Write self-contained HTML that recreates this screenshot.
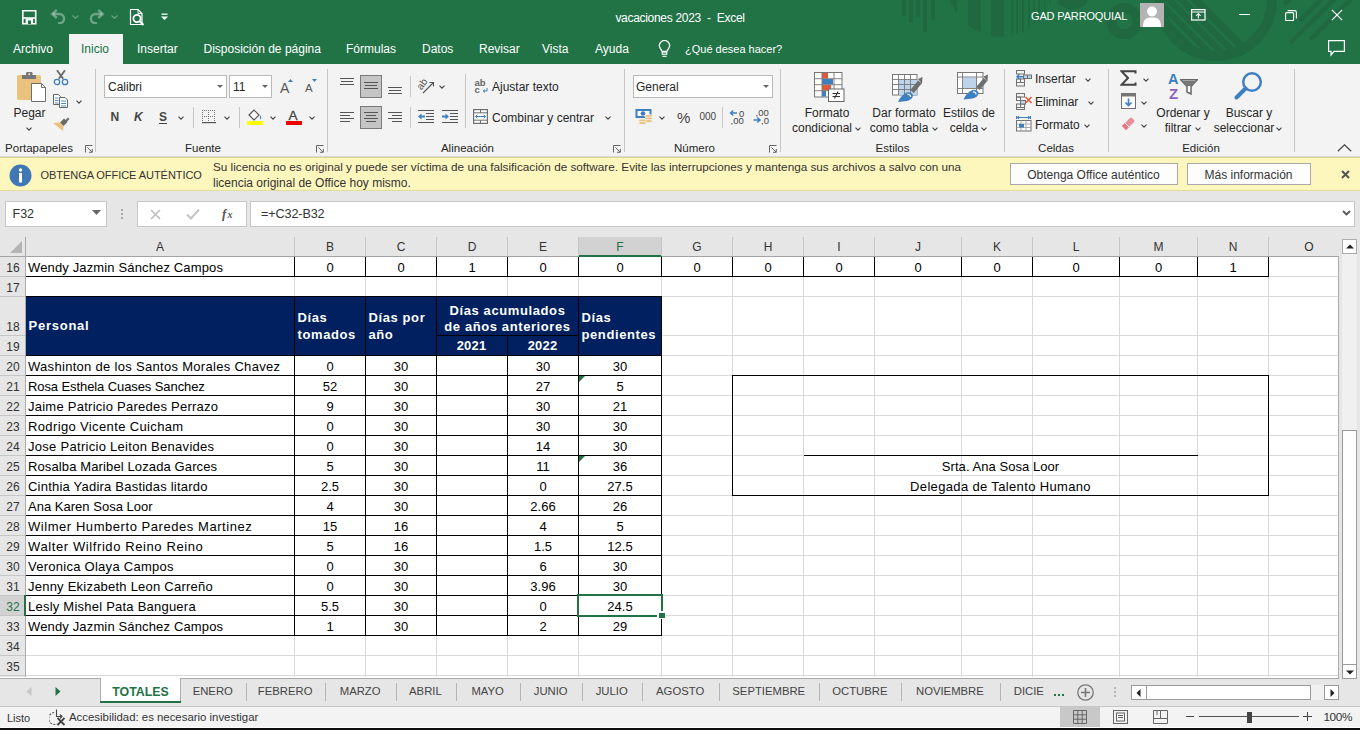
<!DOCTYPE html>
<html><head><meta charset="utf-8"><title>vacaciones 2023 - Excel</title>
<style>html,body{margin:0;padding:0;width:1360px;height:730px;overflow:hidden;background:#fff;font-family:"Liberation Sans",sans-serif;}
#root{position:relative;width:1360px;height:730px;overflow:hidden;}</style></head>
<body><div id="root">
<div style="position:absolute;left:0px;top:0px;width:1360px;height:64px;background:#217346"></div>
<svg style="position:absolute;left:0px;top:0px;" width="1360" height="64" viewBox="0 0 1360 64"><rect x="902" y="0" width="4" height="16" fill="rgba(20,20,20,0.11)"/><rect x="909" y="0" width="4" height="22.7" fill="rgba(20,20,20,0.11)"/><rect x="916" y="0" width="4" height="16.7" fill="rgba(20,20,20,0.11)"/><rect x="923" y="0" width="4" height="31.8" fill="rgba(20,20,20,0.11)"/><rect x="931" y="0" width="4" height="19.7" fill="rgba(20,20,20,0.11)"/><clipPath id="bowl"><circle cx="1001" cy="-16" r="52.6"/></clipPath><g clip-path="url(#bowl)" fill="rgba(20,20,20,0.11)"><rect x="968" y="0" width="13" height="40"/><rect x="991" y="0" width="13" height="40"/><rect x="1011.3" y="0" width="2" height="40"/><rect x="1016" y="0" width="2" height="40"/><rect x="1022" y="0" width="2" height="40"/><rect x="1028.3" y="0" width="1.6" height="40"/><rect x="1033.4" y="0" width="1.6" height="40"/><rect x="1038.4" y="0" width="1.8" height="40"/><rect x="1044" y="0" width="1.6" height="40"/><rect x="1049.4" y="0" width="1.5" height="40"/></g><path d="M949.7 0 L956.8 0 L956.8 13.7 Z" fill="rgba(20,20,20,0.11)"/><path d="M1058 0 A14 9 0 0 0 1087 0 Z" fill="rgba(20,20,20,0.11)"/><circle cx="1124.5" cy="21" r="13" fill="none" stroke="rgba(20,20,20,0.11)" stroke-width="10"/><clipPath id="bigd"><circle cx="1216" cy="0" r="61"/></clipPath><g clip-path="url(#bigd)"><rect x="1150" y="0" width="130" height="64" fill="rgba(20,20,20,0.11)"/></g><clipPath id="bigin"><circle cx="1216" cy="0" r="51"/></clipPath><g clip-path="url(#bigin)"><path d="M1196 -5 L1266 65 L1290 -20 Z" fill="#217346"/><line x1="1139.6" y1="-48.6" x2="1259.6" y2="71.4" stroke="#217346" stroke-width="2.6"/><line x1="1133.3" y1="-42.3" x2="1253.3" y2="77.7" stroke="#217346" stroke-width="2.6"/><line x1="1126.9" y1="-35.9" x2="1246.9" y2="84.1" stroke="#217346" stroke-width="2.6"/><line x1="1120.6" y1="-29.6" x2="1240.6" y2="90.4" stroke="#217346" stroke-width="2.6"/><line x1="1114.2" y1="-23.2" x2="1234.2" y2="96.8" stroke="#217346" stroke-width="2.6"/></g><g stroke="rgba(20,20,20,0.11)" stroke-width="4.5"><line x1="1284.2" y1="4.4" x2="1292" y2="-3.4"/><line x1="1300" y1="20.6" x2="1324" y2="-3.4"/><line x1="1290.3" y1="43" x2="1337" y2="-3.6"/><line x1="1310.5" y1="39.4" x2="1354" y2="-4"/></g></svg>
<svg style="position:absolute;left:22px;top:10px;" width="15" height="15" viewBox="0 0 15 15"><path d="M0.8 0.8 H13.7 V13.7 H0.8 Z" fill="none" stroke="#fff" stroke-width="1.6"/><rect x="0.8" y="7.2" width="13" height="1.6" fill="#fff"/><rect x="3.6" y="8.5" width="7.5" height="5.5" fill="#fff"/><rect x="6" y="10.5" width="3" height="3.5" fill="#217346"/></svg>
<svg style="position:absolute;left:50px;top:9px;" width="16" height="15" viewBox="0 0 16 15"><path d="M3 5 H9.5 A4.6 4.6 0 0 1 9.5 14.2 H8" fill="none" stroke="rgba(255,255,255,0.35)" stroke-width="2.4"/><path d="M6.8 1 L2.2 5 L6.8 9" fill="none" stroke="rgba(255,255,255,0.35)" stroke-width="2.4"/></svg>
<svg style="position:absolute;left:72px;top:15px;" width="7" height="4" viewBox="0 0 7 4"><path d="M0.5 0.5 L3.5 3.2 L6.5 0.5" fill="none" stroke="rgba(255,255,255,0.35)" stroke-width="1.1"/></svg>
<svg style="position:absolute;left:89px;top:9px;" width="16" height="15" viewBox="0 0 16 15"><path d="M13 5 H6.5 A4.6 4.6 0 0 0 6.5 14.2 H8" fill="none" stroke="rgba(255,255,255,0.35)" stroke-width="2.4"/><path d="M9.2 1 L13.8 5 L9.2 9" fill="none" stroke="rgba(255,255,255,0.35)" stroke-width="2.4"/></svg>
<svg style="position:absolute;left:111px;top:15px;" width="7" height="4" viewBox="0 0 7 4"><path d="M0.5 0.5 L3.5 3.2 L6.5 0.5" fill="none" stroke="rgba(255,255,255,0.35)" stroke-width="1.1"/></svg>
<svg style="position:absolute;left:129px;top:8px;" width="17" height="18" viewBox="0 0 17 18"><path d="M1.5 1.5 H9 L13 5.5 V16.5 H1.5 Z" fill="none" stroke="#fff" stroke-width="1.2"/><path d="M9 1.5 V5.5 H13" fill="none" stroke="#fff" stroke-width="1"/><circle cx="8" cy="10.5" r="3.6" fill="none" stroke="#fff" stroke-width="1.8"/><path d="M10.5 13 L14.5 17" stroke="#fff" stroke-width="2.2"/></svg>
<svg style="position:absolute;left:161px;top:13px;" width="8" height="8" viewBox="0 0 8 8"><rect x="0.5" y="0.5" width="6" height="1.3" fill="#fff"/><path d="M0 3.5 H7 L3.5 7 Z" fill="#fff"/></svg>
<div style="position:absolute;left:180px;width:1000px;text-align:center;top:11.84px;font-size:12px;line-height:12px;color:#fff;font-weight:normal;white-space:nowrap;letter-spacing:-0.3px;font-family:'Liberation Sans', sans-serif;">vacaciones 2023&nbsp; -&nbsp; Excel</div>
<div style="position:absolute;left:1031px;top:10.89px;font-size:11px;line-height:11px;color:#fff;font-weight:normal;white-space:nowrap;letter-spacing:-0.15px;font-family:'Liberation Sans', sans-serif;">GAD PARROQUIAL</div>
<svg style="position:absolute;left:1140px;top:3px;" width="24" height="24" viewBox="0 0 24 24"><rect width="24" height="24" fill="#b3b3b3"/><circle cx="12" cy="8.5" r="5" fill="#fff"/><path d="M3 24 C3 16 6 14.5 12 14.5 C18 14.5 21 16 21 24 Z" fill="#fff"/></svg>
<svg style="position:absolute;left:1191px;top:9px;" width="15" height="12" viewBox="0 0 15 12"><rect x="0.6" y="0.6" width="13.4" height="10.4" fill="none" stroke="#fff" stroke-width="1.2"/><line x1="0.6" y1="3" x2="14" y2="3" stroke="#fff" stroke-width="1"/><path d="M7.3 9.5 V4.8 M5 6.8 L7.3 4.5 L9.6 6.8" fill="none" stroke="#fff" stroke-width="1.1"/></svg>
<div style="position:absolute;left:1239px;top:14px;width:11px;height:1px;background:#fff"></div>
<svg style="position:absolute;left:1285px;top:10px;" width="12" height="11" viewBox="0 0 12 11"><rect x="0.6" y="2.6" width="8" height="8" rx="1" fill="none" stroke="#fff" stroke-width="1.1"/><path d="M2.6 0.6 H9.5 Q11.4 0.6 11.4 2.5 V8.5" fill="none" stroke="#fff" stroke-width="1.1"/></svg>
<svg style="position:absolute;left:1331px;top:9px;" width="12" height="12" viewBox="0 0 12 12"><path d="M0.8 0.8 L11.2 11.2 M11.2 0.8 L0.8 11.2" stroke="#fff" stroke-width="1.2"/></svg>
<svg style="position:absolute;left:1328px;top:40px;" width="18" height="17" viewBox="0 0 18 17"><path d="M0.6 0.6 H16.4 V11.4 H6 L3 15 V11.4 H0.6 Z" fill="none" stroke="#fff" stroke-width="1.2"/></svg>
<div style="position:absolute;left:69px;top:34px;width:54px;height:30px;background:#f3f3f3"></div>
<div style="position:absolute;left:13px;top:42.84px;font-size:12px;line-height:12px;color:#fff;font-weight:normal;white-space:nowrap;font-family:'Liberation Sans', sans-serif;">Archivo</div>
<div style="position:absolute;left:81px;top:42.84px;font-size:12px;line-height:12px;color:#217346;font-weight:normal;white-space:nowrap;font-family:'Liberation Sans', sans-serif;">Inicio</div>
<div style="position:absolute;left:137px;top:42.84px;font-size:12px;line-height:12px;color:#fff;font-weight:normal;white-space:nowrap;font-family:'Liberation Sans', sans-serif;">Insertar</div>
<div style="position:absolute;left:203.5px;top:42.84px;font-size:12px;line-height:12px;color:#fff;font-weight:normal;white-space:nowrap;font-family:'Liberation Sans', sans-serif;">Disposición de página</div>
<div style="position:absolute;left:346px;top:42.84px;font-size:12px;line-height:12px;color:#fff;font-weight:normal;white-space:nowrap;font-family:'Liberation Sans', sans-serif;">Fórmulas</div>
<div style="position:absolute;left:422px;top:42.84px;font-size:12px;line-height:12px;color:#fff;font-weight:normal;white-space:nowrap;font-family:'Liberation Sans', sans-serif;">Datos</div>
<div style="position:absolute;left:479px;top:42.84px;font-size:12px;line-height:12px;color:#fff;font-weight:normal;white-space:nowrap;font-family:'Liberation Sans', sans-serif;">Revisar</div>
<div style="position:absolute;left:542px;top:42.84px;font-size:12px;line-height:12px;color:#fff;font-weight:normal;white-space:nowrap;font-family:'Liberation Sans', sans-serif;">Vista</div>
<div style="position:absolute;left:595px;top:42.84px;font-size:12px;line-height:12px;color:#fff;font-weight:normal;white-space:nowrap;font-family:'Liberation Sans', sans-serif;">Ayuda</div>
<svg style="position:absolute;left:658px;top:40px;" width="13" height="18" viewBox="0 0 13 18"><path d="M4.2 11.5 L2.3 8.3 A5 5 0 1 1 10.7 8.3 L8.8 11.5 Z" fill="none" stroke="#fff" stroke-width="1.3" stroke-linejoin="round"/><rect x="4.2" y="12" width="4.6" height="2.2" fill="none" stroke="#fff" stroke-width="1.1"/><line x1="4.3" y1="16.3" x2="8.7" y2="16.3" stroke="#fff" stroke-width="1.1"/></svg>
<div style="position:absolute;left:685px;top:43.69px;font-size:11px;line-height:11px;color:#fff;font-weight:normal;white-space:nowrap;font-family:'Liberation Sans', sans-serif;">¿Qué desea hacer?</div>
<div style="position:absolute;left:0px;top:64px;width:1360px;height:93px;background:#f3f3f3"></div>
<div style="position:absolute;left:0px;top:156px;width:1360px;height:1px;background:#d6d6d6"></div>
<div style="position:absolute;left:95px;top:69px;width:1px;height:83px;background:#c6c6c6"></div>
<div style="position:absolute;left:327px;top:69px;width:1px;height:83px;background:#c6c6c6"></div>
<div style="position:absolute;left:624px;top:69px;width:1px;height:83px;background:#c6c6c6"></div>
<div style="position:absolute;left:780px;top:69px;width:1px;height:83px;background:#c6c6c6"></div>
<div style="position:absolute;left:1004px;top:69px;width:1px;height:83px;background:#c6c6c6"></div>
<div style="position:absolute;left:1108px;top:69px;width:1px;height:83px;background:#c6c6c6"></div>
<div style="position:absolute;left:1294px;top:69px;width:1px;height:83px;background:#c6c6c6"></div>
<div style="position:absolute;left:-461px;width:1000px;text-align:center;top:143.27px;font-size:11.5px;line-height:11.5px;color:#262626;font-weight:normal;white-space:nowrap;font-family:'Liberation Sans', sans-serif;">Portapapeles</div>
<div style="position:absolute;left:-297px;width:1000px;text-align:center;top:143.27px;font-size:11.5px;line-height:11.5px;color:#262626;font-weight:normal;white-space:nowrap;font-family:'Liberation Sans', sans-serif;">Fuente</div>
<div style="position:absolute;left:-32.5px;width:1000px;text-align:center;top:143.27px;font-size:11.5px;line-height:11.5px;color:#262626;font-weight:normal;white-space:nowrap;font-family:'Liberation Sans', sans-serif;">Alineación</div>
<div style="position:absolute;left:194.5px;width:1000px;text-align:center;top:143.27px;font-size:11.5px;line-height:11.5px;color:#262626;font-weight:normal;white-space:nowrap;font-family:'Liberation Sans', sans-serif;">Número</div>
<div style="position:absolute;left:392.5px;width:1000px;text-align:center;top:143.27px;font-size:11.5px;line-height:11.5px;color:#262626;font-weight:normal;white-space:nowrap;font-family:'Liberation Sans', sans-serif;">Estilos</div>
<div style="position:absolute;left:556px;width:1000px;text-align:center;top:143.27px;font-size:11.5px;line-height:11.5px;color:#262626;font-weight:normal;white-space:nowrap;font-family:'Liberation Sans', sans-serif;">Celdas</div>
<div style="position:absolute;left:701px;width:1000px;text-align:center;top:143.27px;font-size:11.5px;line-height:11.5px;color:#262626;font-weight:normal;white-space:nowrap;font-family:'Liberation Sans', sans-serif;">Edición</div>
<svg style="position:absolute;left:85px;top:145px;" width="8" height="8" viewBox="0 0 8 8"><path d="M0.5 7.5 V0.5 H7.5" fill="none" stroke="#666" stroke-width="1"/><path d="M2.5 2.5 L7 7 M4 7.3 H7.3 V4" fill="none" stroke="#666" stroke-width="1"/></svg>
<svg style="position:absolute;left:316px;top:145px;" width="8" height="8" viewBox="0 0 8 8"><path d="M0.5 7.5 V0.5 H7.5" fill="none" stroke="#666" stroke-width="1"/><path d="M2.5 2.5 L7 7 M4 7.3 H7.3 V4" fill="none" stroke="#666" stroke-width="1"/></svg>
<svg style="position:absolute;left:613px;top:145px;" width="8" height="8" viewBox="0 0 8 8"><path d="M0.5 7.5 V0.5 H7.5" fill="none" stroke="#666" stroke-width="1"/><path d="M2.5 2.5 L7 7 M4 7.3 H7.3 V4" fill="none" stroke="#666" stroke-width="1"/></svg>
<svg style="position:absolute;left:769px;top:145px;" width="8" height="8" viewBox="0 0 8 8"><path d="M0.5 7.5 V0.5 H7.5" fill="none" stroke="#666" stroke-width="1"/><path d="M2.5 2.5 L7 7 M4 7.3 H7.3 V4" fill="none" stroke="#666" stroke-width="1"/></svg>
<svg style="position:absolute;left:1337px;top:144px;" width="15" height="8" viewBox="0 0 15 8"><path d="M0.8 7.2 L7.5 0.8 L14.2 7.2" fill="none" stroke="#444" stroke-width="1.2"/></svg>
<svg style="position:absolute;left:16px;top:71px;" width="30" height="32" viewBox="0 0 30 32"><rect x="1" y="4" width="24" height="25" rx="1.8" fill="#e9c27d"/><rect x="6" y="4" width="14" height="4" fill="#767676"/><path d="M10 4.2 V2.2 Q10 1 11.2 1 H15.3 Q16.5 1 16.5 2.2 V4.2 Z" fill="#767676"/><rect x="12.4" y="2.4" width="1.6" height="1.4" fill="#fff"/><path d="M15.5 12.5 H25.5 L29.5 16.5 V30.5 H15.5 Z" fill="#fff" stroke="#6e6e6e" stroke-width="1"/><path d="M25.5 12.5 V16.5 H29.5" fill="none" stroke="#6e6e6e" stroke-width="1"/></svg>
<div style="position:absolute;left:-470.5px;width:1000px;text-align:center;top:107.14px;font-size:12px;line-height:12px;color:#262626;font-weight:normal;white-space:nowrap;font-family:'Liberation Sans', sans-serif;">Pegar</div>
<svg style="position:absolute;left:26px;top:126.5px;" width="6" height="4" viewBox="0 0 6 4"><path d="M0.5 0.7 L3 3.2 L5.5 0.7" fill="none" stroke="#444" stroke-width="1.1"/></svg>
<svg style="position:absolute;left:53px;top:69px;" width="16" height="17" viewBox="0 0 16 17"><path d="M4 1.2 L10.2 9.8 M12 1.2 L5.8 9.8" stroke="#6a6a6a" stroke-width="1.9"/><circle cx="4" cy="13" r="2.7" fill="none" stroke="#3e7fc1" stroke-width="1.3"/><circle cx="12" cy="13" r="2.7" fill="none" stroke="#3e7fc1" stroke-width="1.3"/></svg>
<svg style="position:absolute;left:52px;top:93px;" width="18" height="16" viewBox="0 0 18 16"><path d="M1.5 1.5 H6.5 L8.5 3.5 V11.5 H1.5 Z" fill="#fff" stroke="#666" stroke-width="1"/><path d="M3 5 H6.5 M3 7.5 H6.5 M3 10 H6.5" stroke="#3e7fc1" stroke-width="0.9"/><path d="M7.5 4.5 H13 L15.5 7 V14.5 H7.5 Z" fill="#fff" stroke="#666" stroke-width="1"/><path d="M9 8 H14 M9 10.5 H14 M9 13 H14" stroke="#3e7fc1" stroke-width="0.9"/></svg>
<svg style="position:absolute;left:76px;top:99.5px;" width="6" height="4" viewBox="0 0 6 4"><path d="M0.5 0.7 L3 3.2 L5.5 0.7" fill="none" stroke="#444" stroke-width="1.1"/></svg>
<svg style="position:absolute;left:52px;top:116px;" width="18" height="16" viewBox="0 0 18 16"><path d="M13 4.5 L16 1.5 L17.5 3 L14.5 6 Z" fill="#6a6a6a"/><path d="M8 6.5 L12 2.5 L15.5 6 L11.5 10 Z" fill="#6a6a6a"/><path d="M1 7 L8 6.5 L11.5 10 L11 15 Z" fill="#e9c27d"/></svg>
<div style="position:absolute;left:104px;top:75px;width:123px;height:23px;background:#fff;border:1px solid #b9b9b9;box-sizing:border-box"></div>
<div style="position:absolute;left:108px;top:80.84px;font-size:12px;line-height:12px;color:#262626;font-weight:normal;white-space:nowrap;font-family:'Liberation Sans', sans-serif;">Calibri</div>
<svg style="position:absolute;left:216.5px;top:85px;" width="6" height="3" viewBox="0 0 6 3"><path d="M0 0 H6 L3 3 Z" fill="#666"/></svg>
<div style="position:absolute;left:229px;top:75px;width:43px;height:23px;background:#fff;border:1px solid #b9b9b9;box-sizing:border-box"></div>
<div style="position:absolute;left:233px;top:80.84px;font-size:12px;line-height:12px;color:#262626;font-weight:normal;white-space:nowrap;font-family:'Liberation Sans', sans-serif;">11</div>
<svg style="position:absolute;left:261.5px;top:85px;" width="6" height="3" viewBox="0 0 6 3"><path d="M0 0 H6 L3 3 Z" fill="#666"/></svg>
<div style="position:absolute;left:280px;top:81.15px;font-size:14px;line-height:14px;color:#555;font-weight:normal;white-space:nowrap;font-family:'Liberation Sans', sans-serif;">A</div>
<svg style="position:absolute;left:288px;top:79px;" width="5" height="3" viewBox="0 0 5 3"><path d="M0 3 L2.5 0 L5 3 Z" fill="#3e7fc1"/></svg>
<div style="position:absolute;left:305px;top:83.27px;font-size:11.5px;line-height:11.5px;color:#555;font-weight:normal;white-space:nowrap;font-family:'Liberation Sans', sans-serif;">A</div>
<svg style="position:absolute;left:312px;top:79px;" width="5" height="3" viewBox="0 0 5 3"><path d="M0 0 H5 L2.5 3 Z" fill="#3e7fc1"/></svg>
<div style="position:absolute;left:110.5px;top:111.34px;font-size:12px;line-height:12px;color:#444;font-weight:bold;white-space:nowrap;font-family:'Liberation Sans', sans-serif;">N</div>
<div style="position:absolute;left:134px;top:111.34px;font-size:12px;line-height:12px;color:#444;font-weight:bold;white-space:nowrap;font-family:'Liberation Sans', sans-serif;font-style:italic">K</div>
<div style="position:absolute;left:159px;top:111.34px;font-size:12px;line-height:12px;color:#444;font-weight:bold;white-space:nowrap;font-family:'Liberation Sans', sans-serif;">S</div>
<div style="position:absolute;left:159px;top:123px;width:8px;height:1px;background:#444"></div>
<svg style="position:absolute;left:178px;top:115.5px;" width="6" height="4" viewBox="0 0 6 4"><path d="M0.5 0.7 L3 3.2 L5.5 0.7" fill="none" stroke="#444" stroke-width="1.1"/></svg>
<div style="position:absolute;left:193px;top:107px;width:1px;height:21px;background:#c6c6c6"></div>
<svg style="position:absolute;left:202px;top:110px;" width="14" height="14" viewBox="0 0 14 14"><rect x="0" y="0" width="1" height="1" fill="#777"/><rect x="0" y="0" width="1" height="1" fill="#777"/><rect x="0" y="6" width="1" height="1" fill="#777"/><rect x="6" y="0" width="1" height="1" fill="#777"/><rect x="0" y="12" width="1" height="1" fill="#777"/><rect x="12" y="0" width="1" height="1" fill="#777"/><rect x="2" y="0" width="1" height="1" fill="#777"/><rect x="0" y="2" width="1" height="1" fill="#777"/><rect x="2" y="6" width="1" height="1" fill="#777"/><rect x="6" y="2" width="1" height="1" fill="#777"/><rect x="2" y="12" width="1" height="1" fill="#777"/><rect x="12" y="2" width="1" height="1" fill="#777"/><rect x="4" y="0" width="1" height="1" fill="#777"/><rect x="0" y="4" width="1" height="1" fill="#777"/><rect x="4" y="6" width="1" height="1" fill="#777"/><rect x="6" y="4" width="1" height="1" fill="#777"/><rect x="4" y="12" width="1" height="1" fill="#777"/><rect x="12" y="4" width="1" height="1" fill="#777"/><rect x="6" y="0" width="1" height="1" fill="#777"/><rect x="0" y="6" width="1" height="1" fill="#777"/><rect x="6" y="6" width="1" height="1" fill="#777"/><rect x="6" y="6" width="1" height="1" fill="#777"/><rect x="6" y="12" width="1" height="1" fill="#777"/><rect x="12" y="6" width="1" height="1" fill="#777"/><rect x="8" y="0" width="1" height="1" fill="#777"/><rect x="0" y="8" width="1" height="1" fill="#777"/><rect x="8" y="6" width="1" height="1" fill="#777"/><rect x="6" y="8" width="1" height="1" fill="#777"/><rect x="8" y="12" width="1" height="1" fill="#777"/><rect x="12" y="8" width="1" height="1" fill="#777"/><rect x="10" y="0" width="1" height="1" fill="#777"/><rect x="0" y="10" width="1" height="1" fill="#777"/><rect x="10" y="6" width="1" height="1" fill="#777"/><rect x="6" y="10" width="1" height="1" fill="#777"/><rect x="10" y="12" width="1" height="1" fill="#777"/><rect x="12" y="10" width="1" height="1" fill="#777"/><rect x="12" y="0" width="1" height="1" fill="#777"/><rect x="0" y="12" width="1" height="1" fill="#777"/><rect x="12" y="6" width="1" height="1" fill="#777"/><rect x="6" y="12" width="1" height="1" fill="#777"/><rect x="12" y="12" width="1" height="1" fill="#777"/><rect x="12" y="12" width="1" height="1" fill="#777"/><rect x="0" y="12" width="14" height="1.2" fill="#555"/></svg>
<svg style="position:absolute;left:224px;top:115.5px;" width="6" height="4" viewBox="0 0 6 4"><path d="M0.5 0.7 L3 3.2 L5.5 0.7" fill="none" stroke="#444" stroke-width="1.1"/></svg>
<div style="position:absolute;left:239px;top:107px;width:1px;height:21px;background:#c6c6c6"></div>
<svg style="position:absolute;left:246px;top:108px;" width="18" height="17" viewBox="0 0 18 17"><path d="M3 7 L8 2 L13 7 L8 12 Z" fill="#fff" stroke="#555" stroke-width="1.2"/><path d="M14 7 Q16.5 10 14 11.5" fill="#3e7fc1"/><rect x="1" y="13" width="16" height="4" fill="#ffff00"/></svg>
<svg style="position:absolute;left:270px;top:115.5px;" width="6" height="4" viewBox="0 0 6 4"><path d="M0.5 0.7 L3 3.2 L5.5 0.7" fill="none" stroke="#444" stroke-width="1.1"/></svg>
<div style="position:absolute;left:288.5px;top:109.07px;font-size:13.5px;line-height:13.5px;color:#444;font-weight:normal;white-space:nowrap;font-family:'Liberation Sans', sans-serif;-webkit-text-stroke:0.3px #444">A</div>
<div style="position:absolute;left:286px;top:121px;width:16px;height:4px;background:#e00"></div>
<svg style="position:absolute;left:309px;top:115.5px;" width="6" height="4" viewBox="0 0 6 4"><path d="M0.5 0.7 L3 3.2 L5.5 0.7" fill="none" stroke="#444" stroke-width="1.1"/></svg>
<div style="position:absolute;left:360px;top:75px;width:22px;height:23px;background:#c5c5c5;border:1px solid #7a7a7a;box-sizing:border-box"></div>
<div style="position:absolute;left:360px;top:106px;width:22px;height:23px;background:#c5c5c5;border:1px solid #7a7a7a;box-sizing:border-box"></div>
<svg style="position:absolute;left:340px;top:78px;" width="16" height="16" viewBox="0 0 16 16"><rect x="0" y="0" width="14" height="1" fill="#555"/><rect x="1" y="3" width="12" height="1" fill="#555"/><rect x="0" y="6" width="14" height="1" fill="#555"/></svg>
<svg style="position:absolute;left:364px;top:82px;" width="16" height="16" viewBox="0 0 16 16"><rect x="0" y="0" width="14" height="1" fill="#555"/><rect x="1" y="3" width="12" height="1" fill="#555"/><rect x="0" y="6" width="14" height="1" fill="#555"/></svg>
<svg style="position:absolute;left:388px;top:87px;" width="16" height="16" viewBox="0 0 16 16"><rect x="0" y="0" width="14" height="1" fill="#555"/><rect x="1" y="3" width="12" height="1" fill="#555"/><rect x="0" y="6" width="14" height="1" fill="#555"/></svg>
<svg style="position:absolute;left:340px;top:112px;" width="16" height="16" viewBox="0 0 16 16"><rect x="0" y="0" width="14" height="1" fill="#555"/><rect x="0" y="3" width="10" height="1" fill="#555"/><rect x="0" y="6" width="14" height="1" fill="#555"/><rect x="0" y="9" width="10" height="1" fill="#555"/></svg>
<svg style="position:absolute;left:364px;top:112px;" width="16" height="16" viewBox="0 0 16 16"><rect x="0" y="0" width="14" height="1" fill="#555"/><rect x="2" y="3" width="10" height="1" fill="#555"/><rect x="0" y="6" width="14" height="1" fill="#555"/><rect x="2" y="9" width="10" height="1" fill="#555"/></svg>
<svg style="position:absolute;left:388px;top:112px;" width="16" height="16" viewBox="0 0 16 16"><rect x="0" y="0" width="14" height="1" fill="#555"/><rect x="4" y="3" width="10" height="1" fill="#555"/><rect x="0" y="6" width="14" height="1" fill="#555"/><rect x="4" y="9" width="10" height="1" fill="#555"/></svg>
<div style="position:absolute;left:410px;top:76px;width:1px;height:21px;background:#c6c6c6"></div>
<div style="position:absolute;left:410px;top:107px;width:1px;height:21px;background:#c6c6c6"></div>
<div style="position:absolute;left:465px;top:74px;width:1px;height:54px;background:#c6c6c6"></div>
<svg style="position:absolute;left:417px;top:77px;" width="20" height="18" viewBox="0 0 20 18"><text x="0" y="0" font-size="10" font-family="Liberation Sans" fill="#555" transform="translate(4.5 13.5) rotate(-55)">ab</text><path d="M6 16 L16 6" fill="none" stroke="#555" stroke-width="1.1"/><path d="M12.5 5.5 H16.5 V9.5" fill="none" stroke="#555" stroke-width="1.1"/></svg>
<svg style="position:absolute;left:439px;top:84.5px;" width="6" height="4" viewBox="0 0 6 4"><path d="M0.5 0.7 L3 3.2 L5.5 0.7" fill="none" stroke="#444" stroke-width="1.1"/></svg>
<svg style="position:absolute;left:418px;top:110px;" width="17" height="14" viewBox="0 0 17 14"><rect x="0" y="0" width="16" height="1" fill="#555"/><rect x="8" y="3" width="8" height="1" fill="#555"/><rect x="8" y="6" width="8" height="1" fill="#555"/><rect x="8" y="9" width="8" height="1" fill="#555"/><rect x="0" y="12" width="16" height="1" fill="#555"/><path d="M0 6.5 L3.5 3.5 V9.5 Z" fill="#3e7fc1"/><rect x="3" y="5.5" width="4" height="2" fill="#3e7fc1"/></svg>
<svg style="position:absolute;left:442px;top:110px;" width="17" height="14" viewBox="0 0 17 14"><rect x="0" y="0" width="16" height="1" fill="#555"/><rect x="8" y="3" width="8" height="1" fill="#555"/><rect x="8" y="6" width="8" height="1" fill="#555"/><rect x="8" y="9" width="8" height="1" fill="#555"/><rect x="0" y="12" width="16" height="1" fill="#555"/><path d="M7 6.5 L3.5 3.5 V9.5 Z" fill="#3e7fc1"/><rect x="0" y="5.5" width="4" height="2" fill="#3e7fc1"/></svg>
<div style="position:absolute;left:474.5px;top:77.96px;font-size:9.5px;line-height:9.5px;color:#666;font-weight:bold;white-space:nowrap;font-family:'Liberation Sans', sans-serif;">ab</div>
<div style="position:absolute;left:474.5px;top:84.96px;font-size:9.5px;line-height:9.5px;color:#666;font-weight:bold;white-space:nowrap;font-family:'Liberation Sans', sans-serif;">c</div>
<svg style="position:absolute;left:481.5px;top:87.5px;" width="6" height="5" viewBox="0 0 6 5"><path d="M5 0 V3 H1.5 M3 1.5 L1.2 3 L3 4.5" fill="none" stroke="#3e7fc1" stroke-width="1"/></svg>
<div style="position:absolute;left:492px;top:80.84px;font-size:12px;line-height:12px;color:#262626;font-weight:normal;white-space:nowrap;font-family:'Liberation Sans', sans-serif;">Ajustar texto</div>
<svg style="position:absolute;left:473px;top:109px;" width="15" height="15" viewBox="0 0 15 15"><rect x="0.6" y="0.6" width="13.8" height="13.8" fill="#fff" stroke="#6e6e6e" stroke-width="1.2"/><path d="M0.6 3.8 H14.4 M0.6 11.2 H14.4 M7.5 0.6 V3.8 M7.5 11.2 V14.4" stroke="#6e6e6e" stroke-width="1"/><path d="M2.5 7.5 H12.5 M4.3 5.8 L2.5 7.5 L4.3 9.2 M10.7 5.8 L12.5 7.5 L10.7 9.2" fill="none" stroke="#3e7fc1" stroke-width="1"/></svg>
<div style="position:absolute;left:492px;top:111.84px;font-size:12px;line-height:12px;color:#262626;font-weight:normal;white-space:nowrap;font-family:'Liberation Sans', sans-serif;">Combinar y centrar</div>
<svg style="position:absolute;left:605px;top:115.5px;" width="6" height="4" viewBox="0 0 6 4"><path d="M0.5 0.7 L3 3.2 L5.5 0.7" fill="none" stroke="#444" stroke-width="1.1"/></svg>
<div style="position:absolute;left:633px;top:75px;width:140px;height:23px;background:#fff;border:1px solid #b9b9b9;box-sizing:border-box"></div>
<div style="position:absolute;left:636px;top:80.84px;font-size:12px;line-height:12px;color:#262626;font-weight:normal;white-space:nowrap;font-family:'Liberation Sans', sans-serif;">General</div>
<svg style="position:absolute;left:762.5px;top:85px;" width="6" height="3" viewBox="0 0 6 3"><path d="M0 0 H6 L3 3 Z" fill="#666"/></svg>
<svg style="position:absolute;left:635px;top:108px;" width="18" height="17" viewBox="0 0 18 17"><rect x="0.5" y="1" width="16" height="9" fill="#3e7fc1"/><rect x="2.5" y="3" width="12" height="5" fill="#fff"/><circle cx="8" cy="5.5" r="2.3" fill="#3e7fc1"/><g fill="#e9c27d" stroke="#f3f3f3" stroke-width="0.8"><ellipse cx="13.5" cy="8" rx="3.8" ry="1.6"/><ellipse cx="13.5" cy="10.5" rx="3.8" ry="1.6"/><ellipse cx="13.5" cy="13" rx="3.8" ry="1.6"/><ellipse cx="7.5" cy="12.5" rx="3.8" ry="1.6"/><ellipse cx="7.5" cy="15" rx="3.8" ry="1.6"/></g></svg>
<svg style="position:absolute;left:659px;top:115.5px;" width="6" height="4" viewBox="0 0 6 4"><path d="M0.5 0.7 L3 3.2 L5.5 0.7" fill="none" stroke="#444" stroke-width="1.1"/></svg>
<div style="position:absolute;left:677px;top:110.30px;font-size:15px;line-height:15px;color:#444;font-weight:normal;white-space:nowrap;font-family:'Liberation Sans', sans-serif;">%</div>
<div style="position:absolute;left:699.5px;top:111.53px;font-size:10px;line-height:10px;color:#444;font-weight:normal;white-space:nowrap;font-family:'Liberation Sans', sans-serif;">000</div>
<div style="position:absolute;left:722px;top:107px;width:1px;height:21px;background:#c6c6c6"></div>
<svg style="position:absolute;left:729px;top:108px;" width="17" height="17" viewBox="0 0 17 17"><text x="10" y="9" font-size="9.5" font-family="Liberation Sans" fill="#444">0</text><text x="1.5" y="16" font-size="9.5" font-family="Liberation Sans" fill="#444">,00</text><path d="M1.5 5 H8 M4.2 2.5 L1.5 5 L4.2 7.5" fill="none" stroke="#3e7fc1" stroke-width="1.4"/></svg>
<svg style="position:absolute;left:753px;top:108px;" width="17" height="17" viewBox="0 0 17 17"><text x="2.5" y="8" font-size="9.5" font-family="Liberation Sans" fill="#444">,00</text><text x="8" y="16" font-size="9.5" font-family="Liberation Sans" fill="#444">,0</text><path d="M0.5 12 H7 M4.3 9.5 L7 12 L4.3 14.5" fill="none" stroke="#3e7fc1" stroke-width="1.4"/></svg>
<svg style="position:absolute;left:813.5px;top:71.5px;" width="31" height="31" viewBox="0 0 31 31"><rect x="0.5" y="0.5" width="27.5" height="24.5" fill="#fff" stroke="#777" stroke-width="1"/><rect x="8" y="1" width="6" height="5.5" fill="#e05a3a"/><rect x="8" y="7" width="11" height="5.5" fill="#3e7fc1"/><rect x="8" y="13" width="9" height="5.5" fill="#e05a3a"/><rect x="8" y="19" width="4" height="5.5" fill="#3e7fc1"/><path d="M8 0.5 V25 M20 0.5 V25 M0.5 6.7 H28 M0.5 12.7 H28 M0.5 18.7 H28" stroke="#777" stroke-width="0.9"/><rect x="14.5" y="17" width="15.5" height="12.5" fill="#fff" stroke="#666" stroke-width="1"/><path d="M18.5 21.5 H26 M18.5 24.5 H26 M24 19.5 L20.5 26.5" stroke="#333" stroke-width="1.1"/></svg>
<div style="position:absolute;left:327px;width:1000px;text-align:center;top:106.84px;font-size:12px;line-height:12px;color:#262626;font-weight:normal;white-space:nowrap;font-family:'Liberation Sans', sans-serif;">Formato</div>
<div style="position:absolute;left:322px;width:1000px;text-align:center;top:121.84px;font-size:12px;line-height:12px;color:#262626;font-weight:normal;white-space:nowrap;font-family:'Liberation Sans', sans-serif;">condicional</div>
<svg style="position:absolute;left:855px;top:126.5px;" width="6" height="4" viewBox="0 0 6 4"><path d="M0.5 0.7 L3 3.2 L5.5 0.7" fill="none" stroke="#444" stroke-width="1.1"/></svg>
<svg style="position:absolute;left:891.5px;top:73.5px;" width="31" height="31" viewBox="0 0 31 31"><rect x="0.5" y="0.5" width="24.5" height="20.5" fill="#fff" stroke="#777" stroke-width="1"/><rect x="7" y="6" width="18" height="15" fill="#bcd3ea"/><path d="M6.5 0.5 V21 M12.5 0.5 V21 M18.5 0.5 V21 M0.5 5.5 H25 M0.5 10.5 H25 M0.5 15.5 H25" stroke="#777" stroke-width="0.9"/><path d="M20 17.5 L28 8" stroke="#6e6e6e" stroke-width="4.5"/><path d="M26 5 L30.5 3 L30 10 Z" fill="#6e6e6e"/><path d="M6 28 Q9 21 15 18.5 Q19.5 17.5 21 21 Q21 25.5 15 27 Z" fill="#3e7fc1"/><path d="M15.5 20.5 Q18.5 20 18.5 23" fill="none" stroke="#fff" stroke-width="1.3"/></svg>
<div style="position:absolute;left:404px;width:1000px;text-align:center;top:106.84px;font-size:12px;line-height:12px;color:#262626;font-weight:normal;white-space:nowrap;font-family:'Liberation Sans', sans-serif;">Dar formato</div>
<div style="position:absolute;left:399px;width:1000px;text-align:center;top:121.84px;font-size:12px;line-height:12px;color:#262626;font-weight:normal;white-space:nowrap;font-family:'Liberation Sans', sans-serif;">como tabla</div>
<svg style="position:absolute;left:932px;top:126.5px;" width="6" height="4" viewBox="0 0 6 4"><path d="M0.5 0.7 L3 3.2 L5.5 0.7" fill="none" stroke="#444" stroke-width="1.1"/></svg>
<svg style="position:absolute;left:956.5px;top:71.7px;" width="31" height="31" viewBox="0 0 31 31"><rect x="0.5" y="0.5" width="25.5" height="21" fill="#fff" stroke="#777" stroke-width="1"/><rect x="6" y="5.5" width="14" height="11" fill="#bcd3ea"/><path d="M5.5 0.5 V21.5 M19.5 0.5 V21.5 M0.5 5 H26 M0.5 16.5 H26" stroke="#777" stroke-width="0.9"/><path d="M21 16.5 L28.5 7.5" stroke="#6e6e6e" stroke-width="4.5"/><path d="M26.5 4.5 L31 2.5 L30.5 9.5 Z" fill="#6e6e6e"/><path d="M6.5 27.5 Q9.5 20.5 15.5 18 Q20 17 21.5 20.5 Q21.5 25 15.5 26.5 Z" fill="#3e7fc1"/><path d="M16 20 Q19 19.5 19 22.5" fill="none" stroke="#fff" stroke-width="1.3"/></svg>
<div style="position:absolute;left:469px;width:1000px;text-align:center;top:106.84px;font-size:12px;line-height:12px;color:#262626;font-weight:normal;white-space:nowrap;font-family:'Liberation Sans', sans-serif;">Estilos de</div>
<div style="position:absolute;left:464px;width:1000px;text-align:center;top:121.84px;font-size:12px;line-height:12px;color:#262626;font-weight:normal;white-space:nowrap;font-family:'Liberation Sans', sans-serif;">celda</div>
<svg style="position:absolute;left:981px;top:126.5px;" width="6" height="4" viewBox="0 0 6 4"><path d="M0.5 0.7 L3 3.2 L5.5 0.7" fill="none" stroke="#444" stroke-width="1.1"/></svg>
<svg style="position:absolute;left:1016px;top:70px;" width="17" height="17" viewBox="0 0 17 17"><g fill="none" stroke="#707070" stroke-width="1"><rect x="0.5" y="0.5" width="8" height="3.5"/><rect x="0.5" y="9" width="4" height="3.5"/><rect x="4.5" y="9" width="4" height="3.5"/><rect x="0.5" y="12.5" width="8" height="3.5"/></g><rect x="7.5" y="5" width="8" height="3.5" fill="#bcd3ea" stroke="#707070" stroke-width="1"/><path d="M11.5 5 V8.5" stroke="#707070"/><path d="M1 6.8 H7 M3.5 4.3 L1 6.8 L3.5 9.3" fill="none" stroke="#3e7fc1" stroke-width="1.5"/></svg>
<div style="position:absolute;left:1035px;top:72.84px;font-size:12px;line-height:12px;color:#262626;font-weight:normal;white-space:nowrap;font-family:'Liberation Sans', sans-serif;">Insertar</div>
<svg style="position:absolute;left:1085px;top:77.5px;" width="6" height="4" viewBox="0 0 6 4"><path d="M0.5 0.7 L3 3.2 L5.5 0.7" fill="none" stroke="#444" stroke-width="1.1"/></svg>
<svg style="position:absolute;left:1016px;top:93px;" width="17" height="17" viewBox="0 0 17 17"><g fill="none" stroke="#707070" stroke-width="1"><rect x="0.5" y="0.5" width="8" height="3.5"/><rect x="0.5" y="4" width="4" height="3.5"/><rect x="0.5" y="11" width="4" height="3.5"/><rect x="4.5" y="11" width="4" height="3.5"/><rect x="0.5" y="14.5" width="8" height="2"/></g><rect x="4.5" y="7.5" width="5" height="3.5" fill="#bcd3ea" stroke="#707070" stroke-width="1"/><path d="M9.5 4 L15.5 10 M15.5 4 L9.5 10" stroke="#e05a3a" stroke-width="1.5"/></svg>
<div style="position:absolute;left:1035px;top:95.84px;font-size:12px;line-height:12px;color:#262626;font-weight:normal;white-space:nowrap;font-family:'Liberation Sans', sans-serif;">Eliminar</div>
<svg style="position:absolute;left:1088px;top:100.5px;" width="6" height="4" viewBox="0 0 6 4"><path d="M0.5 0.7 L3 3.2 L5.5 0.7" fill="none" stroke="#444" stroke-width="1.1"/></svg>
<svg style="position:absolute;left:1016px;top:116px;" width="16" height="16" viewBox="0 0 16 16"><path d="M1 1.5 H14 M0.5 0 V3 M14.5 0 V3 M3 0 L1 1.5 L3 3 M12 0 L14 1.5 L12 3" fill="none" stroke="#3e7fc1" stroke-width="1"/><rect x="0.5" y="4.5" width="14.5" height="10.5" fill="#fff" stroke="#707070" stroke-width="1"/><path d="M0.5 8 H15 M0.5 11.5 H15 M5 4.5 V15 M10 4.5 V15" stroke="#a0a0a0" stroke-width="0.9"/><rect x="3" y="8" width="5" height="3.5" fill="#3e7fc1"/></svg>
<div style="position:absolute;left:1035px;top:118.84px;font-size:12px;line-height:12px;color:#262626;font-weight:normal;white-space:nowrap;font-family:'Liberation Sans', sans-serif;">Formato</div>
<svg style="position:absolute;left:1084px;top:123.5px;" width="6" height="4" viewBox="0 0 6 4"><path d="M0.5 0.7 L3 3.2 L5.5 0.7" fill="none" stroke="#444" stroke-width="1.1"/></svg>
<svg style="position:absolute;left:1119.5px;top:69.5px;" width="17" height="17" viewBox="0 0 17 17"><path d="M15.5 3.5 V1.2 H1.5 L8 8 L1.5 14.8 H15.5 V12.5" fill="none" stroke="#444" stroke-width="2"/></svg>
<svg style="position:absolute;left:1143px;top:77.5px;" width="6" height="4" viewBox="0 0 6 4"><path d="M0.5 0.7 L3 3.2 L5.5 0.7" fill="none" stroke="#444" stroke-width="1.1"/></svg>
<svg style="position:absolute;left:1121px;top:93px;" width="15" height="16" viewBox="0 0 15 16"><rect x="0.5" y="0.5" width="14" height="15" fill="#fff" stroke="#707070"/><rect x="0.5" y="0.5" width="14" height="3" fill="#777"/><path d="M7.5 5.5 V12.5 M4.5 9.5 L7.5 12.5 L10.5 9.5" fill="none" stroke="#3e7fc1" stroke-width="1.7"/></svg>
<svg style="position:absolute;left:1141px;top:100.5px;" width="6" height="4" viewBox="0 0 6 4"><path d="M0.5 0.7 L3 3.2 L5.5 0.7" fill="none" stroke="#444" stroke-width="1.1"/></svg>
<svg style="position:absolute;left:1121px;top:116px;" width="14" height="14" viewBox="0 0 14 14"><path d="M1 10 L9 2 Q10 1 11 2 L13 4 Q14 5 13 6 L5 14 Z" fill="#e8909a"/><path d="M1 10 L4 7 L8 11 L5 14 Z" fill="#ef6f86"/><path d="M4 7 L8 11" stroke="#fff" stroke-width="1"/></svg>
<svg style="position:absolute;left:1141px;top:123.5px;" width="6" height="4" viewBox="0 0 6 4"><path d="M0.5 0.7 L3 3.2 L5.5 0.7" fill="none" stroke="#444" stroke-width="1.1"/></svg>
<div style="position:absolute;left:1168px;top:72.23px;font-size:14.5px;line-height:14.5px;color:#3e7fc1;font-weight:bold;white-space:nowrap;font-family:'Liberation Sans', sans-serif;">A</div>
<div style="position:absolute;left:1169px;top:86.30px;font-size:15px;line-height:15px;color:#9060c0;font-weight:bold;white-space:nowrap;font-family:'Liberation Sans', sans-serif;">Z</div>
<svg style="position:absolute;left:1180px;top:79px;" width="18" height="16" viewBox="0 0 18 16"><path d="M0.5 0.5 H17.5 L11 7.5 V15 L7 13 V7.5 Z" fill="#fff" stroke="#666" stroke-width="1.5"/><path d="M1.5 1.5 H16.5 L11 7 H7 Z" fill="#777"/></svg>
<div style="position:absolute;left:683px;width:1000px;text-align:center;top:106.84px;font-size:12px;line-height:12px;color:#262626;font-weight:normal;white-space:nowrap;font-family:'Liberation Sans', sans-serif;">Ordenar y</div>
<div style="position:absolute;left:678px;width:1000px;text-align:center;top:121.84px;font-size:12px;line-height:12px;color:#262626;font-weight:normal;white-space:nowrap;font-family:'Liberation Sans', sans-serif;">filtrar</div>
<svg style="position:absolute;left:1195px;top:126.5px;" width="6" height="4" viewBox="0 0 6 4"><path d="M0.5 0.7 L3 3.2 L5.5 0.7" fill="none" stroke="#444" stroke-width="1.1"/></svg>
<svg style="position:absolute;left:1234px;top:71px;" width="29" height="29" viewBox="0 0 29 29"><circle cx="18" cy="11" r="8.8" fill="none" stroke="#3e7fc1" stroke-width="2.5"/><path d="M11.5 17.5 L2.5 26.5" stroke="#3e7fc1" stroke-width="4" stroke-linecap="round"/></svg>
<div style="position:absolute;left:749px;width:1000px;text-align:center;top:106.84px;font-size:12px;line-height:12px;color:#262626;font-weight:normal;white-space:nowrap;font-family:'Liberation Sans', sans-serif;">Buscar y</div>
<div style="position:absolute;left:744px;width:1000px;text-align:center;top:121.84px;font-size:12px;line-height:12px;color:#262626;font-weight:normal;white-space:nowrap;font-family:'Liberation Sans', sans-serif;">seleccionar</div>
<svg style="position:absolute;left:1276px;top:126.5px;" width="6" height="4" viewBox="0 0 6 4"><path d="M0.5 0.7 L3 3.2 L5.5 0.7" fill="none" stroke="#444" stroke-width="1.1"/></svg>
<div style="position:absolute;left:0px;top:157px;width:1360px;height:34px;background:#fdf6bd"></div>
<div style="position:absolute;left:0px;top:190px;width:1360px;height:1px;background:#e3dc9a"></div>
<div style="position:absolute;left:0px;top:157px;width:1360px;height:1px;background:#dcd78c"></div>
<svg style="position:absolute;left:9px;top:164px;" width="23" height="23" viewBox="0 0 23 23"><circle cx="11.5" cy="11.5" r="11" fill="#3f78b4"/><circle cx="11.5" cy="6" r="1.7" fill="#fff"/><rect x="10" y="9" width="3" height="9.5" fill="#fff"/></svg>
<div style="position:absolute;left:40.5px;top:169.69px;font-size:11px;line-height:11px;color:#333;font-weight:normal;white-space:nowrap;letter-spacing:-0.05px;font-family:'Liberation Sans', sans-serif;">OBTENGA OFFICE AUTÉNTICO</div>
<div style="position:absolute;left:213px;top:160.56px;font-size:11.74px;line-height:11.74px;color:#333;font-weight:normal;white-space:nowrap;font-family:'Liberation Sans', sans-serif;">Su licencia no es original y puede ser víctima de una falsificación de software. Evite las interrupciones y mantenga sus archivos a salvo con una</div>
<div style="position:absolute;left:213px;top:177.04px;font-size:12px;line-height:12px;color:#333;font-weight:normal;white-space:nowrap;font-family:'Liberation Sans', sans-serif;">licencia original de Office hoy mismo.</div>
<div style="position:absolute;left:1010px;top:163px;width:168px;height:22px;background:#fdfdfd;border:1px solid #a9a9a9;box-sizing:border-box"></div>
<div style="position:absolute;left:593.5px;width:1000px;text-align:center;top:168.84px;font-size:12px;line-height:12px;color:#333;font-weight:normal;white-space:nowrap;font-family:'Liberation Sans', sans-serif;">Obtenga Office auténtico</div>
<div style="position:absolute;left:1187px;top:163px;width:124px;height:22px;background:#fdfdfd;border:1px solid #a9a9a9;box-sizing:border-box"></div>
<div style="position:absolute;left:748.5px;width:1000px;text-align:center;top:168.84px;font-size:12px;line-height:12px;color:#333;font-weight:normal;white-space:nowrap;font-family:'Liberation Sans', sans-serif;">Más información</div>
<svg style="position:absolute;left:1341px;top:170px;" width="9" height="9" viewBox="0 0 9 9"><path d="M1 1 L8 8 M8 1 L1 8" stroke="#555" stroke-width="2"/></svg>
<div style="position:absolute;left:0px;top:191px;width:1360px;height:46px;background:#e6e6e6"></div>
<div style="position:absolute;left:5px;top:201px;width:102px;height:26px;background:#fff;border:1px solid #c6c6c6;box-sizing:border-box"></div>
<div style="position:absolute;left:12.5px;top:208.42px;font-size:12.5px;line-height:12.5px;color:#333;font-weight:normal;white-space:nowrap;font-family:'Liberation Sans', sans-serif;">F32</div>
<svg style="position:absolute;left:92px;top:210px;" width="9" height="5" viewBox="0 0 9 5"><path d="M0 0 H9 L4.5 5 Z" fill="#666"/></svg>
<div style="position:absolute;left:121px;top:209px;width:2px;height:2px;background:#a8a8a8"></div>
<div style="position:absolute;left:121px;top:213px;width:2px;height:2px;background:#a8a8a8"></div>
<div style="position:absolute;left:121px;top:217px;width:2px;height:2px;background:#a8a8a8"></div>
<div style="position:absolute;left:137px;top:201px;width:110px;height:26px;background:#fff;border:1px solid #c6c6c6;box-sizing:border-box"></div>
<svg style="position:absolute;left:150px;top:209px;" width="11" height="11" viewBox="0 0 11 11"><path d="M1 1 L10 10 M10 1 L1 10" stroke="#bdbdbd" stroke-width="1.5"/></svg>
<svg style="position:absolute;left:186px;top:208px;" width="14" height="12" viewBox="0 0 14 12"><path d="M1 6.5 L5 10.5 L13 1.5" fill="none" stroke="#c4c4c4" stroke-width="2"/></svg>
<div style="position:absolute;left:222px;top:206.50px;font-size:13px;line-height:13px;color:#555;font-weight:bold;white-space:nowrap;font-family:'Liberation Serif', serif;"><i>f</i></div>
<div style="position:absolute;left:227.5px;top:209.53px;font-size:10px;line-height:10px;color:#555;font-weight:bold;white-space:nowrap;font-family:'Liberation Serif', serif;"><i>x</i></div>
<div style="position:absolute;left:250px;top:201px;width:1105px;height:26px;background:#fff;border:1px solid #c6c6c6;box-sizing:border-box"></div>
<div style="position:absolute;left:261px;top:208.33px;font-size:12.6px;line-height:12.6px;color:#333;font-weight:normal;white-space:nowrap;letter-spacing:-0.1px;font-family:'Liberation Sans', sans-serif;">=+C32-B32</div>
<svg style="position:absolute;left:1342px;top:210px;" width="9" height="6" viewBox="0 0 9 6"><path d="M1 1 L4.5 4.5 L8 1" fill="none" stroke="#555" stroke-width="1.8"/></svg>
<div style="position:absolute;left:0px;top:237px;width:1339px;height:441px;background:#fff"></div>
<div style="position:absolute;left:0px;top:237px;width:1339px;height:19px;background:#e6e6e6"></div>
<div style="position:absolute;left:0px;top:256px;width:1339px;height:1px;background:#a3a3a3"></div>
<div style="position:absolute;left:579px;top:237px;width:82px;height:19px;background:#d2d2d2"></div>
<div style="position:absolute;left:579px;top:255px;width:83px;height:2px;background:#217346"></div>
<div style="position:absolute;left:-340.0px;width:1000px;text-align:center;top:240.84px;font-size:12px;line-height:12px;color:#333;font-weight:normal;white-space:nowrap;font-family:'Liberation Sans', sans-serif;">A</div>
<div style="position:absolute;left:-170.0px;width:1000px;text-align:center;top:240.84px;font-size:12px;line-height:12px;color:#333;font-weight:normal;white-space:nowrap;font-family:'Liberation Sans', sans-serif;">B</div>
<div style="position:absolute;left:-99.0px;width:1000px;text-align:center;top:240.84px;font-size:12px;line-height:12px;color:#333;font-weight:normal;white-space:nowrap;font-family:'Liberation Sans', sans-serif;">C</div>
<div style="position:absolute;left:-28.0px;width:1000px;text-align:center;top:240.84px;font-size:12px;line-height:12px;color:#333;font-weight:normal;white-space:nowrap;font-family:'Liberation Sans', sans-serif;">D</div>
<div style="position:absolute;left:43.0px;width:1000px;text-align:center;top:240.84px;font-size:12px;line-height:12px;color:#333;font-weight:normal;white-space:nowrap;font-family:'Liberation Sans', sans-serif;">E</div>
<div style="position:absolute;left:120.0px;width:1000px;text-align:center;top:240.84px;font-size:12px;line-height:12px;color:#217346;font-weight:normal;white-space:nowrap;font-family:'Liberation Sans', sans-serif;">F</div>
<div style="position:absolute;left:197.0px;width:1000px;text-align:center;top:240.84px;font-size:12px;line-height:12px;color:#333;font-weight:normal;white-space:nowrap;font-family:'Liberation Sans', sans-serif;">G</div>
<div style="position:absolute;left:268.0px;width:1000px;text-align:center;top:240.84px;font-size:12px;line-height:12px;color:#333;font-weight:normal;white-space:nowrap;font-family:'Liberation Sans', sans-serif;">H</div>
<div style="position:absolute;left:339.0px;width:1000px;text-align:center;top:240.84px;font-size:12px;line-height:12px;color:#333;font-weight:normal;white-space:nowrap;font-family:'Liberation Sans', sans-serif;">I</div>
<div style="position:absolute;left:418.0px;width:1000px;text-align:center;top:240.84px;font-size:12px;line-height:12px;color:#333;font-weight:normal;white-space:nowrap;font-family:'Liberation Sans', sans-serif;">J</div>
<div style="position:absolute;left:497.0px;width:1000px;text-align:center;top:240.84px;font-size:12px;line-height:12px;color:#333;font-weight:normal;white-space:nowrap;font-family:'Liberation Sans', sans-serif;">K</div>
<div style="position:absolute;left:576.0px;width:1000px;text-align:center;top:240.84px;font-size:12px;line-height:12px;color:#333;font-weight:normal;white-space:nowrap;font-family:'Liberation Sans', sans-serif;">L</div>
<div style="position:absolute;left:658.5px;width:1000px;text-align:center;top:240.84px;font-size:12px;line-height:12px;color:#333;font-weight:normal;white-space:nowrap;font-family:'Liberation Sans', sans-serif;">M</div>
<div style="position:absolute;left:733.0px;width:1000px;text-align:center;top:240.84px;font-size:12px;line-height:12px;color:#333;font-weight:normal;white-space:nowrap;font-family:'Liberation Sans', sans-serif;">N</div>
<div style="position:absolute;left:809px;width:1000px;text-align:center;top:240.84px;font-size:12px;line-height:12px;color:#333;font-weight:normal;white-space:nowrap;font-family:'Liberation Sans', sans-serif;">O</div>
<div style="position:absolute;left:294px;top:237px;width:1px;height:19px;background:#c6c6c6"></div>
<div style="position:absolute;left:365px;top:237px;width:1px;height:19px;background:#c6c6c6"></div>
<div style="position:absolute;left:436px;top:237px;width:1px;height:19px;background:#c6c6c6"></div>
<div style="position:absolute;left:507px;top:237px;width:1px;height:19px;background:#c6c6c6"></div>
<div style="position:absolute;left:578px;top:237px;width:1px;height:19px;background:#c6c6c6"></div>
<div style="position:absolute;left:661px;top:237px;width:1px;height:19px;background:#c6c6c6"></div>
<div style="position:absolute;left:732px;top:237px;width:1px;height:19px;background:#c6c6c6"></div>
<div style="position:absolute;left:803px;top:237px;width:1px;height:19px;background:#c6c6c6"></div>
<div style="position:absolute;left:874px;top:237px;width:1px;height:19px;background:#c6c6c6"></div>
<div style="position:absolute;left:961px;top:237px;width:1px;height:19px;background:#c6c6c6"></div>
<div style="position:absolute;left:1032px;top:237px;width:1px;height:19px;background:#c6c6c6"></div>
<div style="position:absolute;left:1119px;top:237px;width:1px;height:19px;background:#c6c6c6"></div>
<div style="position:absolute;left:1197px;top:237px;width:1px;height:19px;background:#c6c6c6"></div>
<div style="position:absolute;left:1268px;top:237px;width:1px;height:19px;background:#c6c6c6"></div>
<svg style="position:absolute;left:10px;top:241px;" width="13" height="13" viewBox="0 0 13 13"><path d="M12 0 V12 H0 Z" fill="#b4b4b4"/></svg>
<div style="position:absolute;left:0px;top:257px;width:25px;height:421px;background:#e6e6e6"></div>
<div style="position:absolute;left:25px;top:237px;width:1px;height:441px;background:#ababab"></div>
<div style="position:absolute;left:26px;top:276px;width:1313px;height:1px;background:#d9d9d9"></div>
<div style="position:absolute;left:0px;top:276px;width:25px;height:1px;background:#c6c6c6"></div>
<div style="position:absolute;left:26px;top:296px;width:1313px;height:1px;background:#d9d9d9"></div>
<div style="position:absolute;left:0px;top:296px;width:25px;height:1px;background:#c6c6c6"></div>
<div style="position:absolute;left:26px;top:335px;width:1313px;height:1px;background:#d9d9d9"></div>
<div style="position:absolute;left:0px;top:335px;width:25px;height:1px;background:#c6c6c6"></div>
<div style="position:absolute;left:26px;top:355px;width:1313px;height:1px;background:#d9d9d9"></div>
<div style="position:absolute;left:0px;top:355px;width:25px;height:1px;background:#c6c6c6"></div>
<div style="position:absolute;left:26px;top:375px;width:1313px;height:1px;background:#d9d9d9"></div>
<div style="position:absolute;left:0px;top:375px;width:25px;height:1px;background:#c6c6c6"></div>
<div style="position:absolute;left:26px;top:395px;width:1313px;height:1px;background:#d9d9d9"></div>
<div style="position:absolute;left:0px;top:395px;width:25px;height:1px;background:#c6c6c6"></div>
<div style="position:absolute;left:26px;top:415px;width:1313px;height:1px;background:#d9d9d9"></div>
<div style="position:absolute;left:0px;top:415px;width:25px;height:1px;background:#c6c6c6"></div>
<div style="position:absolute;left:26px;top:435px;width:1313px;height:1px;background:#d9d9d9"></div>
<div style="position:absolute;left:0px;top:435px;width:25px;height:1px;background:#c6c6c6"></div>
<div style="position:absolute;left:26px;top:455px;width:1313px;height:1px;background:#d9d9d9"></div>
<div style="position:absolute;left:0px;top:455px;width:25px;height:1px;background:#c6c6c6"></div>
<div style="position:absolute;left:26px;top:475px;width:1313px;height:1px;background:#d9d9d9"></div>
<div style="position:absolute;left:0px;top:475px;width:25px;height:1px;background:#c6c6c6"></div>
<div style="position:absolute;left:26px;top:495px;width:1313px;height:1px;background:#d9d9d9"></div>
<div style="position:absolute;left:0px;top:495px;width:25px;height:1px;background:#c6c6c6"></div>
<div style="position:absolute;left:26px;top:515px;width:1313px;height:1px;background:#d9d9d9"></div>
<div style="position:absolute;left:0px;top:515px;width:25px;height:1px;background:#c6c6c6"></div>
<div style="position:absolute;left:26px;top:535px;width:1313px;height:1px;background:#d9d9d9"></div>
<div style="position:absolute;left:0px;top:535px;width:25px;height:1px;background:#c6c6c6"></div>
<div style="position:absolute;left:26px;top:555px;width:1313px;height:1px;background:#d9d9d9"></div>
<div style="position:absolute;left:0px;top:555px;width:25px;height:1px;background:#c6c6c6"></div>
<div style="position:absolute;left:26px;top:575px;width:1313px;height:1px;background:#d9d9d9"></div>
<div style="position:absolute;left:0px;top:575px;width:25px;height:1px;background:#c6c6c6"></div>
<div style="position:absolute;left:26px;top:595px;width:1313px;height:1px;background:#d9d9d9"></div>
<div style="position:absolute;left:0px;top:595px;width:25px;height:1px;background:#c6c6c6"></div>
<div style="position:absolute;left:26px;top:615px;width:1313px;height:1px;background:#d9d9d9"></div>
<div style="position:absolute;left:0px;top:615px;width:25px;height:1px;background:#c6c6c6"></div>
<div style="position:absolute;left:26px;top:635px;width:1313px;height:1px;background:#d9d9d9"></div>
<div style="position:absolute;left:0px;top:635px;width:25px;height:1px;background:#c6c6c6"></div>
<div style="position:absolute;left:26px;top:655px;width:1313px;height:1px;background:#d9d9d9"></div>
<div style="position:absolute;left:0px;top:655px;width:25px;height:1px;background:#c6c6c6"></div>
<div style="position:absolute;left:26px;top:675px;width:1313px;height:1px;background:#d9d9d9"></div>
<div style="position:absolute;left:0px;top:675px;width:25px;height:1px;background:#c6c6c6"></div>
<div style="position:absolute;left:294px;top:257px;width:1px;height:421px;background:#d9d9d9"></div>
<div style="position:absolute;left:365px;top:257px;width:1px;height:421px;background:#d9d9d9"></div>
<div style="position:absolute;left:436px;top:257px;width:1px;height:421px;background:#d9d9d9"></div>
<div style="position:absolute;left:507px;top:257px;width:1px;height:421px;background:#d9d9d9"></div>
<div style="position:absolute;left:578px;top:257px;width:1px;height:421px;background:#d9d9d9"></div>
<div style="position:absolute;left:661px;top:257px;width:1px;height:421px;background:#d9d9d9"></div>
<div style="position:absolute;left:732px;top:257px;width:1px;height:421px;background:#d9d9d9"></div>
<div style="position:absolute;left:803px;top:257px;width:1px;height:421px;background:#d9d9d9"></div>
<div style="position:absolute;left:874px;top:257px;width:1px;height:421px;background:#d9d9d9"></div>
<div style="position:absolute;left:961px;top:257px;width:1px;height:421px;background:#d9d9d9"></div>
<div style="position:absolute;left:1032px;top:257px;width:1px;height:421px;background:#d9d9d9"></div>
<div style="position:absolute;left:1119px;top:257px;width:1px;height:421px;background:#d9d9d9"></div>
<div style="position:absolute;left:1197px;top:257px;width:1px;height:421px;background:#d9d9d9"></div>
<div style="position:absolute;left:1268px;top:257px;width:1px;height:421px;background:#d9d9d9"></div>
<div style="position:absolute;left:0px;top:596px;width:25px;height:19px;background:#d2d2d2"></div>
<div style="position:absolute;left:24px;top:595px;width:2px;height:21px;background:#217346"></div>
<div style="position:absolute;left:-487px;width:1000px;text-align:center;top:261.84px;font-size:12px;line-height:12px;color:#333;font-weight:normal;white-space:nowrap;font-family:'Liberation Sans', sans-serif;">16</div>
<div style="position:absolute;left:-487px;width:1000px;text-align:center;top:281.84px;font-size:12px;line-height:12px;color:#333;font-weight:normal;white-space:nowrap;font-family:'Liberation Sans', sans-serif;">17</div>
<div style="position:absolute;left:-487px;width:1000px;text-align:center;top:320.84px;font-size:12px;line-height:12px;color:#333;font-weight:normal;white-space:nowrap;font-family:'Liberation Sans', sans-serif;">18</div>
<div style="position:absolute;left:-487px;width:1000px;text-align:center;top:340.84px;font-size:12px;line-height:12px;color:#333;font-weight:normal;white-space:nowrap;font-family:'Liberation Sans', sans-serif;">19</div>
<div style="position:absolute;left:-487px;width:1000px;text-align:center;top:360.84px;font-size:12px;line-height:12px;color:#333;font-weight:normal;white-space:nowrap;font-family:'Liberation Sans', sans-serif;">20</div>
<div style="position:absolute;left:-487px;width:1000px;text-align:center;top:380.84px;font-size:12px;line-height:12px;color:#333;font-weight:normal;white-space:nowrap;font-family:'Liberation Sans', sans-serif;">21</div>
<div style="position:absolute;left:-487px;width:1000px;text-align:center;top:400.84px;font-size:12px;line-height:12px;color:#333;font-weight:normal;white-space:nowrap;font-family:'Liberation Sans', sans-serif;">22</div>
<div style="position:absolute;left:-487px;width:1000px;text-align:center;top:420.84px;font-size:12px;line-height:12px;color:#333;font-weight:normal;white-space:nowrap;font-family:'Liberation Sans', sans-serif;">23</div>
<div style="position:absolute;left:-487px;width:1000px;text-align:center;top:440.84px;font-size:12px;line-height:12px;color:#333;font-weight:normal;white-space:nowrap;font-family:'Liberation Sans', sans-serif;">24</div>
<div style="position:absolute;left:-487px;width:1000px;text-align:center;top:460.84px;font-size:12px;line-height:12px;color:#333;font-weight:normal;white-space:nowrap;font-family:'Liberation Sans', sans-serif;">25</div>
<div style="position:absolute;left:-487px;width:1000px;text-align:center;top:480.84px;font-size:12px;line-height:12px;color:#333;font-weight:normal;white-space:nowrap;font-family:'Liberation Sans', sans-serif;">26</div>
<div style="position:absolute;left:-487px;width:1000px;text-align:center;top:500.84px;font-size:12px;line-height:12px;color:#333;font-weight:normal;white-space:nowrap;font-family:'Liberation Sans', sans-serif;">27</div>
<div style="position:absolute;left:-487px;width:1000px;text-align:center;top:520.84px;font-size:12px;line-height:12px;color:#333;font-weight:normal;white-space:nowrap;font-family:'Liberation Sans', sans-serif;">28</div>
<div style="position:absolute;left:-487px;width:1000px;text-align:center;top:540.84px;font-size:12px;line-height:12px;color:#333;font-weight:normal;white-space:nowrap;font-family:'Liberation Sans', sans-serif;">29</div>
<div style="position:absolute;left:-487px;width:1000px;text-align:center;top:560.84px;font-size:12px;line-height:12px;color:#333;font-weight:normal;white-space:nowrap;font-family:'Liberation Sans', sans-serif;">30</div>
<div style="position:absolute;left:-487px;width:1000px;text-align:center;top:580.84px;font-size:12px;line-height:12px;color:#333;font-weight:normal;white-space:nowrap;font-family:'Liberation Sans', sans-serif;">31</div>
<div style="position:absolute;left:-487px;width:1000px;text-align:center;top:600.84px;font-size:12px;line-height:12px;color:#217346;font-weight:normal;white-space:nowrap;font-family:'Liberation Sans', sans-serif;">32</div>
<div style="position:absolute;left:-487px;width:1000px;text-align:center;top:620.84px;font-size:12px;line-height:12px;color:#333;font-weight:normal;white-space:nowrap;font-family:'Liberation Sans', sans-serif;">33</div>
<div style="position:absolute;left:-487px;width:1000px;text-align:center;top:640.84px;font-size:12px;line-height:12px;color:#333;font-weight:normal;white-space:nowrap;font-family:'Liberation Sans', sans-serif;">34</div>
<div style="position:absolute;left:-487px;width:1000px;text-align:center;top:660.84px;font-size:12px;line-height:12px;color:#333;font-weight:normal;white-space:nowrap;font-family:'Liberation Sans', sans-serif;">35</div>
<div style="position:absolute;left:0px;top:677px;width:1339px;height:1px;background:#fff"></div>
<div style="position:absolute;left:0px;top:678px;width:1339px;height:1px;background:#ababab"></div>
<div style="position:absolute;left:1338px;top:256px;width:1px;height:423px;background:#ababab"></div>
<div style="position:absolute;left:1339px;top:237px;width:21px;height:442px;background:#e6e6e6"></div>
<div style="position:absolute;left:1342px;top:254px;width:15px;height:410px;background:#f0f0f0"></div>
<div style="position:absolute;left:1342px;top:239px;width:15px;height:15px;background:#fff;border:1px solid #ababab;box-sizing:border-box"></div>
<svg style="position:absolute;left:1346px;top:244px;" width="8" height="5" viewBox="0 0 8 5"><path d="M0 4.5 L4 0.5 L8 4.5 Z" fill="#222"/></svg>
<div style="position:absolute;left:1342px;top:430px;width:15px;height:235px;background:#fff;border:1px solid #9a9a9a;box-sizing:border-box"></div>
<div style="position:absolute;left:1342px;top:664px;width:15px;height:15px;background:#fff;border:1px solid #9a9a9a;box-sizing:border-box"></div>
<svg style="position:absolute;left:1346px;top:670px;" width="8" height="5" viewBox="0 0 8 5"><path d="M0 0.5 H8 L4 4.5 Z" fill="#222"/></svg>
<div style="position:absolute;left:28px;top:261.00px;font-size:13px;line-height:13px;color:#000;font-weight:normal;white-space:nowrap;letter-spacing:0.142px;font-family:'Liberation Sans', sans-serif;">Wendy Jazmin Sánchez Campos</div>
<div style="position:absolute;left:-170.0px;width:1000px;text-align:center;top:261.00px;font-size:13px;line-height:13px;color:#000;font-weight:normal;white-space:nowrap;font-family:'Liberation Sans', sans-serif;">0</div>
<div style="position:absolute;left:-99.0px;width:1000px;text-align:center;top:261.00px;font-size:13px;line-height:13px;color:#000;font-weight:normal;white-space:nowrap;font-family:'Liberation Sans', sans-serif;">0</div>
<div style="position:absolute;left:-28.0px;width:1000px;text-align:center;top:261.00px;font-size:13px;line-height:13px;color:#000;font-weight:normal;white-space:nowrap;font-family:'Liberation Sans', sans-serif;">1</div>
<div style="position:absolute;left:43.0px;width:1000px;text-align:center;top:261.00px;font-size:13px;line-height:13px;color:#000;font-weight:normal;white-space:nowrap;font-family:'Liberation Sans', sans-serif;">0</div>
<div style="position:absolute;left:120.0px;width:1000px;text-align:center;top:261.00px;font-size:13px;line-height:13px;color:#000;font-weight:normal;white-space:nowrap;font-family:'Liberation Sans', sans-serif;">0</div>
<div style="position:absolute;left:197.0px;width:1000px;text-align:center;top:261.00px;font-size:13px;line-height:13px;color:#000;font-weight:normal;white-space:nowrap;font-family:'Liberation Sans', sans-serif;">0</div>
<div style="position:absolute;left:268.0px;width:1000px;text-align:center;top:261.00px;font-size:13px;line-height:13px;color:#000;font-weight:normal;white-space:nowrap;font-family:'Liberation Sans', sans-serif;">0</div>
<div style="position:absolute;left:339.0px;width:1000px;text-align:center;top:261.00px;font-size:13px;line-height:13px;color:#000;font-weight:normal;white-space:nowrap;font-family:'Liberation Sans', sans-serif;">0</div>
<div style="position:absolute;left:418.0px;width:1000px;text-align:center;top:261.00px;font-size:13px;line-height:13px;color:#000;font-weight:normal;white-space:nowrap;font-family:'Liberation Sans', sans-serif;">0</div>
<div style="position:absolute;left:497.0px;width:1000px;text-align:center;top:261.00px;font-size:13px;line-height:13px;color:#000;font-weight:normal;white-space:nowrap;font-family:'Liberation Sans', sans-serif;">0</div>
<div style="position:absolute;left:576.0px;width:1000px;text-align:center;top:261.00px;font-size:13px;line-height:13px;color:#000;font-weight:normal;white-space:nowrap;font-family:'Liberation Sans', sans-serif;">0</div>
<div style="position:absolute;left:658.5px;width:1000px;text-align:center;top:261.00px;font-size:13px;line-height:13px;color:#000;font-weight:normal;white-space:nowrap;font-family:'Liberation Sans', sans-serif;">0</div>
<div style="position:absolute;left:733.0px;width:1000px;text-align:center;top:261.00px;font-size:13px;line-height:13px;color:#000;font-weight:normal;white-space:nowrap;font-family:'Liberation Sans', sans-serif;">1</div>
<div style="position:absolute;left:26px;top:276px;width:1243px;height:1px;background:#000"></div>
<div style="position:absolute;left:294px;top:257px;width:1px;height:20px;background:#000"></div>
<div style="position:absolute;left:365px;top:257px;width:1px;height:20px;background:#000"></div>
<div style="position:absolute;left:436px;top:257px;width:1px;height:20px;background:#000"></div>
<div style="position:absolute;left:507px;top:257px;width:1px;height:20px;background:#000"></div>
<div style="position:absolute;left:578px;top:257px;width:1px;height:20px;background:#000"></div>
<div style="position:absolute;left:661px;top:257px;width:1px;height:20px;background:#000"></div>
<div style="position:absolute;left:732px;top:257px;width:1px;height:20px;background:#000"></div>
<div style="position:absolute;left:803px;top:257px;width:1px;height:20px;background:#000"></div>
<div style="position:absolute;left:874px;top:257px;width:1px;height:20px;background:#000"></div>
<div style="position:absolute;left:961px;top:257px;width:1px;height:20px;background:#000"></div>
<div style="position:absolute;left:1032px;top:257px;width:1px;height:20px;background:#000"></div>
<div style="position:absolute;left:1119px;top:257px;width:1px;height:20px;background:#000"></div>
<div style="position:absolute;left:1197px;top:257px;width:1px;height:20px;background:#000"></div>
<div style="position:absolute;left:1268px;top:257px;width:1px;height:20px;background:#000"></div>
<div style="position:absolute;left:26px;top:297px;width:636px;height:59px;background:#002060"></div>
<div style="position:absolute;left:26px;top:296px;width:636px;height:1px;background:#000"></div>
<div style="position:absolute;left:26px;top:355px;width:636px;height:1px;background:#000"></div>
<div style="position:absolute;left:294px;top:297px;width:1px;height:59px;background:#000"></div>
<div style="position:absolute;left:365px;top:297px;width:1px;height:59px;background:#000"></div>
<div style="position:absolute;left:436px;top:297px;width:1px;height:59px;background:#000"></div>
<div style="position:absolute;left:578px;top:297px;width:1px;height:59px;background:#000"></div>
<div style="position:absolute;left:661px;top:297px;width:1px;height:59px;background:#000"></div>
<div style="position:absolute;left:507px;top:336px;width:1px;height:19px;background:#000"></div>
<div style="position:absolute;left:437px;top:335px;width:141px;height:1px;background:#000"></div>
<div style="position:absolute;left:28.5px;top:319.00px;font-size:13px;line-height:13px;color:#fff;font-weight:bold;white-space:nowrap;letter-spacing:0.75px;font-family:'Liberation Sans', sans-serif;">Personal</div>
<div style="position:absolute;left:297.5px;top:311.00px;font-size:13px;line-height:13px;color:#fff;font-weight:bold;white-space:nowrap;letter-spacing:0.6px;font-family:'Liberation Sans', sans-serif;">Días</div>
<div style="position:absolute;left:297.5px;top:328.00px;font-size:13px;line-height:13px;color:#fff;font-weight:bold;white-space:nowrap;letter-spacing:0.6px;font-family:'Liberation Sans', sans-serif;">tomados</div>
<div style="position:absolute;left:368.5px;top:311.00px;font-size:13px;line-height:13px;color:#fff;font-weight:bold;white-space:nowrap;letter-spacing:0.6px;font-family:'Liberation Sans', sans-serif;">Días por</div>
<div style="position:absolute;left:368.5px;top:328.00px;font-size:13px;line-height:13px;color:#fff;font-weight:bold;white-space:nowrap;letter-spacing:0.6px;font-family:'Liberation Sans', sans-serif;">año</div>
<div style="position:absolute;left:7.5px;width:1000px;text-align:center;top:303.50px;font-size:13px;line-height:13px;color:#fff;font-weight:bold;white-space:nowrap;letter-spacing:0.6px;font-family:'Liberation Sans', sans-serif;">Días acumulados</div>
<div style="position:absolute;left:7.5px;width:1000px;text-align:center;top:320.00px;font-size:13px;line-height:13px;color:#fff;font-weight:bold;white-space:nowrap;letter-spacing:0.6px;font-family:'Liberation Sans', sans-serif;">de años anteriores</div>
<div style="position:absolute;left:-28.5px;width:1000px;text-align:center;top:339.00px;font-size:13px;line-height:13px;color:#fff;font-weight:bold;white-space:nowrap;letter-spacing:0.2px;font-family:'Liberation Sans', sans-serif;">2021</div>
<div style="position:absolute;left:42.5px;width:1000px;text-align:center;top:339.00px;font-size:13px;line-height:13px;color:#fff;font-weight:bold;white-space:nowrap;letter-spacing:0.2px;font-family:'Liberation Sans', sans-serif;">2022</div>
<div style="position:absolute;left:581.5px;top:311.00px;font-size:13px;line-height:13px;color:#fff;font-weight:bold;white-space:nowrap;letter-spacing:0.6px;font-family:'Liberation Sans', sans-serif;">Días</div>
<div style="position:absolute;left:581.5px;top:328.00px;font-size:13px;line-height:13px;color:#fff;font-weight:bold;white-space:nowrap;letter-spacing:0.6px;font-family:'Liberation Sans', sans-serif;">pendientes</div>
<div style="position:absolute;left:28px;top:360.00px;font-size:13px;line-height:13px;color:#000;font-weight:normal;white-space:nowrap;letter-spacing:0.301px;font-family:'Liberation Sans', sans-serif;">Washinton de los Santos Morales Chavez</div>
<div style="position:absolute;left:-170.0px;width:1000px;text-align:center;top:360.00px;font-size:13px;line-height:13px;color:#000;font-weight:normal;white-space:nowrap;font-family:'Liberation Sans', sans-serif;">0</div>
<div style="position:absolute;left:-99.0px;width:1000px;text-align:center;top:360.00px;font-size:13px;line-height:13px;color:#000;font-weight:normal;white-space:nowrap;font-family:'Liberation Sans', sans-serif;">30</div>
<div style="position:absolute;left:43.0px;width:1000px;text-align:center;top:360.00px;font-size:13px;line-height:13px;color:#000;font-weight:normal;white-space:nowrap;font-family:'Liberation Sans', sans-serif;">30</div>
<div style="position:absolute;left:120.0px;width:1000px;text-align:center;top:360.00px;font-size:13px;line-height:13px;color:#000;font-weight:normal;white-space:nowrap;font-family:'Liberation Sans', sans-serif;">30</div>
<div style="position:absolute;left:26px;top:375px;width:636px;height:1px;background:#000"></div>
<div style="position:absolute;left:28px;top:380.00px;font-size:13px;line-height:13px;color:#000;font-weight:normal;white-space:nowrap;letter-spacing:-0.092px;font-family:'Liberation Sans', sans-serif;">Rosa Esthela Cuases Sanchez</div>
<div style="position:absolute;left:-170.0px;width:1000px;text-align:center;top:380.00px;font-size:13px;line-height:13px;color:#000;font-weight:normal;white-space:nowrap;font-family:'Liberation Sans', sans-serif;">52</div>
<div style="position:absolute;left:-99.0px;width:1000px;text-align:center;top:380.00px;font-size:13px;line-height:13px;color:#000;font-weight:normal;white-space:nowrap;font-family:'Liberation Sans', sans-serif;">30</div>
<div style="position:absolute;left:43.0px;width:1000px;text-align:center;top:380.00px;font-size:13px;line-height:13px;color:#000;font-weight:normal;white-space:nowrap;font-family:'Liberation Sans', sans-serif;">27</div>
<div style="position:absolute;left:120.0px;width:1000px;text-align:center;top:380.00px;font-size:13px;line-height:13px;color:#000;font-weight:normal;white-space:nowrap;font-family:'Liberation Sans', sans-serif;">5</div>
<div style="position:absolute;left:26px;top:395px;width:636px;height:1px;background:#000"></div>
<div style="position:absolute;left:28px;top:400.00px;font-size:13px;line-height:13px;color:#000;font-weight:normal;white-space:nowrap;letter-spacing:0.25px;font-family:'Liberation Sans', sans-serif;">Jaime Patricio Paredes Perrazo</div>
<div style="position:absolute;left:-170.0px;width:1000px;text-align:center;top:400.00px;font-size:13px;line-height:13px;color:#000;font-weight:normal;white-space:nowrap;font-family:'Liberation Sans', sans-serif;">9</div>
<div style="position:absolute;left:-99.0px;width:1000px;text-align:center;top:400.00px;font-size:13px;line-height:13px;color:#000;font-weight:normal;white-space:nowrap;font-family:'Liberation Sans', sans-serif;">30</div>
<div style="position:absolute;left:43.0px;width:1000px;text-align:center;top:400.00px;font-size:13px;line-height:13px;color:#000;font-weight:normal;white-space:nowrap;font-family:'Liberation Sans', sans-serif;">30</div>
<div style="position:absolute;left:120.0px;width:1000px;text-align:center;top:400.00px;font-size:13px;line-height:13px;color:#000;font-weight:normal;white-space:nowrap;font-family:'Liberation Sans', sans-serif;">21</div>
<div style="position:absolute;left:26px;top:415px;width:636px;height:1px;background:#000"></div>
<div style="position:absolute;left:28px;top:420.00px;font-size:13px;line-height:13px;color:#000;font-weight:normal;white-space:nowrap;letter-spacing:0.364px;font-family:'Liberation Sans', sans-serif;">Rodrigo Vicente Cuicham</div>
<div style="position:absolute;left:-170.0px;width:1000px;text-align:center;top:420.00px;font-size:13px;line-height:13px;color:#000;font-weight:normal;white-space:nowrap;font-family:'Liberation Sans', sans-serif;">0</div>
<div style="position:absolute;left:-99.0px;width:1000px;text-align:center;top:420.00px;font-size:13px;line-height:13px;color:#000;font-weight:normal;white-space:nowrap;font-family:'Liberation Sans', sans-serif;">30</div>
<div style="position:absolute;left:43.0px;width:1000px;text-align:center;top:420.00px;font-size:13px;line-height:13px;color:#000;font-weight:normal;white-space:nowrap;font-family:'Liberation Sans', sans-serif;">30</div>
<div style="position:absolute;left:120.0px;width:1000px;text-align:center;top:420.00px;font-size:13px;line-height:13px;color:#000;font-weight:normal;white-space:nowrap;font-family:'Liberation Sans', sans-serif;">30</div>
<div style="position:absolute;left:26px;top:435px;width:636px;height:1px;background:#000"></div>
<div style="position:absolute;left:28px;top:440.00px;font-size:13px;line-height:13px;color:#000;font-weight:normal;white-space:nowrap;letter-spacing:0.288px;font-family:'Liberation Sans', sans-serif;">Jose Patricio Leiton Benavides</div>
<div style="position:absolute;left:-170.0px;width:1000px;text-align:center;top:440.00px;font-size:13px;line-height:13px;color:#000;font-weight:normal;white-space:nowrap;font-family:'Liberation Sans', sans-serif;">0</div>
<div style="position:absolute;left:-99.0px;width:1000px;text-align:center;top:440.00px;font-size:13px;line-height:13px;color:#000;font-weight:normal;white-space:nowrap;font-family:'Liberation Sans', sans-serif;">30</div>
<div style="position:absolute;left:43.0px;width:1000px;text-align:center;top:440.00px;font-size:13px;line-height:13px;color:#000;font-weight:normal;white-space:nowrap;font-family:'Liberation Sans', sans-serif;">14</div>
<div style="position:absolute;left:120.0px;width:1000px;text-align:center;top:440.00px;font-size:13px;line-height:13px;color:#000;font-weight:normal;white-space:nowrap;font-family:'Liberation Sans', sans-serif;">30</div>
<div style="position:absolute;left:26px;top:455px;width:636px;height:1px;background:#000"></div>
<div style="position:absolute;left:28px;top:460.00px;font-size:13px;line-height:13px;color:#000;font-weight:normal;white-space:nowrap;letter-spacing:0.121px;font-family:'Liberation Sans', sans-serif;">Rosalba Maribel Lozada Garces</div>
<div style="position:absolute;left:-170.0px;width:1000px;text-align:center;top:460.00px;font-size:13px;line-height:13px;color:#000;font-weight:normal;white-space:nowrap;font-family:'Liberation Sans', sans-serif;">5</div>
<div style="position:absolute;left:-99.0px;width:1000px;text-align:center;top:460.00px;font-size:13px;line-height:13px;color:#000;font-weight:normal;white-space:nowrap;font-family:'Liberation Sans', sans-serif;">30</div>
<div style="position:absolute;left:43.0px;width:1000px;text-align:center;top:460.00px;font-size:13px;line-height:13px;color:#000;font-weight:normal;white-space:nowrap;font-family:'Liberation Sans', sans-serif;">11</div>
<div style="position:absolute;left:120.0px;width:1000px;text-align:center;top:460.00px;font-size:13px;line-height:13px;color:#000;font-weight:normal;white-space:nowrap;font-family:'Liberation Sans', sans-serif;">36</div>
<div style="position:absolute;left:26px;top:475px;width:636px;height:1px;background:#000"></div>
<div style="position:absolute;left:28px;top:480.00px;font-size:13px;line-height:13px;color:#000;font-weight:normal;white-space:nowrap;letter-spacing:0.217px;font-family:'Liberation Sans', sans-serif;">Cinthia Yadira Bastidas litardo</div>
<div style="position:absolute;left:-170.0px;width:1000px;text-align:center;top:480.00px;font-size:13px;line-height:13px;color:#000;font-weight:normal;white-space:nowrap;font-family:'Liberation Sans', sans-serif;">2.5</div>
<div style="position:absolute;left:-99.0px;width:1000px;text-align:center;top:480.00px;font-size:13px;line-height:13px;color:#000;font-weight:normal;white-space:nowrap;font-family:'Liberation Sans', sans-serif;">30</div>
<div style="position:absolute;left:43.0px;width:1000px;text-align:center;top:480.00px;font-size:13px;line-height:13px;color:#000;font-weight:normal;white-space:nowrap;font-family:'Liberation Sans', sans-serif;">0</div>
<div style="position:absolute;left:120.0px;width:1000px;text-align:center;top:480.00px;font-size:13px;line-height:13px;color:#000;font-weight:normal;white-space:nowrap;font-family:'Liberation Sans', sans-serif;">27.5</div>
<div style="position:absolute;left:26px;top:495px;width:636px;height:1px;background:#000"></div>
<div style="position:absolute;left:28px;top:500.00px;font-size:13px;line-height:13px;color:#000;font-weight:normal;white-space:nowrap;letter-spacing:0.017px;font-family:'Liberation Sans', sans-serif;">Ana Karen Sosa Loor</div>
<div style="position:absolute;left:-170.0px;width:1000px;text-align:center;top:500.00px;font-size:13px;line-height:13px;color:#000;font-weight:normal;white-space:nowrap;font-family:'Liberation Sans', sans-serif;">4</div>
<div style="position:absolute;left:-99.0px;width:1000px;text-align:center;top:500.00px;font-size:13px;line-height:13px;color:#000;font-weight:normal;white-space:nowrap;font-family:'Liberation Sans', sans-serif;">30</div>
<div style="position:absolute;left:43.0px;width:1000px;text-align:center;top:500.00px;font-size:13px;line-height:13px;color:#000;font-weight:normal;white-space:nowrap;font-family:'Liberation Sans', sans-serif;">2.66</div>
<div style="position:absolute;left:120.0px;width:1000px;text-align:center;top:500.00px;font-size:13px;line-height:13px;color:#000;font-weight:normal;white-space:nowrap;font-family:'Liberation Sans', sans-serif;">26</div>
<div style="position:absolute;left:26px;top:515px;width:636px;height:1px;background:#000"></div>
<div style="position:absolute;left:28px;top:520.00px;font-size:13px;line-height:13px;color:#000;font-weight:normal;white-space:nowrap;letter-spacing:0.553px;font-family:'Liberation Sans', sans-serif;">Wilmer Humberto Paredes Martinez</div>
<div style="position:absolute;left:-170.0px;width:1000px;text-align:center;top:520.00px;font-size:13px;line-height:13px;color:#000;font-weight:normal;white-space:nowrap;font-family:'Liberation Sans', sans-serif;">15</div>
<div style="position:absolute;left:-99.0px;width:1000px;text-align:center;top:520.00px;font-size:13px;line-height:13px;color:#000;font-weight:normal;white-space:nowrap;font-family:'Liberation Sans', sans-serif;">16</div>
<div style="position:absolute;left:43.0px;width:1000px;text-align:center;top:520.00px;font-size:13px;line-height:13px;color:#000;font-weight:normal;white-space:nowrap;font-family:'Liberation Sans', sans-serif;">4</div>
<div style="position:absolute;left:120.0px;width:1000px;text-align:center;top:520.00px;font-size:13px;line-height:13px;color:#000;font-weight:normal;white-space:nowrap;font-family:'Liberation Sans', sans-serif;">5</div>
<div style="position:absolute;left:26px;top:535px;width:636px;height:1px;background:#000"></div>
<div style="position:absolute;left:28px;top:540.00px;font-size:13px;line-height:13px;color:#000;font-weight:normal;white-space:nowrap;letter-spacing:0.6px;font-family:'Liberation Sans', sans-serif;">Walter Wilfrido Reino Reino</div>
<div style="position:absolute;left:-170.0px;width:1000px;text-align:center;top:540.00px;font-size:13px;line-height:13px;color:#000;font-weight:normal;white-space:nowrap;font-family:'Liberation Sans', sans-serif;">5</div>
<div style="position:absolute;left:-99.0px;width:1000px;text-align:center;top:540.00px;font-size:13px;line-height:13px;color:#000;font-weight:normal;white-space:nowrap;font-family:'Liberation Sans', sans-serif;">16</div>
<div style="position:absolute;left:43.0px;width:1000px;text-align:center;top:540.00px;font-size:13px;line-height:13px;color:#000;font-weight:normal;white-space:nowrap;font-family:'Liberation Sans', sans-serif;">1.5</div>
<div style="position:absolute;left:120.0px;width:1000px;text-align:center;top:540.00px;font-size:13px;line-height:13px;color:#000;font-weight:normal;white-space:nowrap;font-family:'Liberation Sans', sans-serif;">12.5</div>
<div style="position:absolute;left:26px;top:555px;width:636px;height:1px;background:#000"></div>
<div style="position:absolute;left:28px;top:560.00px;font-size:13px;line-height:13px;color:#000;font-weight:normal;white-space:nowrap;letter-spacing:0.265px;font-family:'Liberation Sans', sans-serif;">Veronica Olaya Campos</div>
<div style="position:absolute;left:-170.0px;width:1000px;text-align:center;top:560.00px;font-size:13px;line-height:13px;color:#000;font-weight:normal;white-space:nowrap;font-family:'Liberation Sans', sans-serif;">0</div>
<div style="position:absolute;left:-99.0px;width:1000px;text-align:center;top:560.00px;font-size:13px;line-height:13px;color:#000;font-weight:normal;white-space:nowrap;font-family:'Liberation Sans', sans-serif;">30</div>
<div style="position:absolute;left:43.0px;width:1000px;text-align:center;top:560.00px;font-size:13px;line-height:13px;color:#000;font-weight:normal;white-space:nowrap;font-family:'Liberation Sans', sans-serif;">6</div>
<div style="position:absolute;left:120.0px;width:1000px;text-align:center;top:560.00px;font-size:13px;line-height:13px;color:#000;font-weight:normal;white-space:nowrap;font-family:'Liberation Sans', sans-serif;">30</div>
<div style="position:absolute;left:26px;top:575px;width:636px;height:1px;background:#000"></div>
<div style="position:absolute;left:28px;top:580.00px;font-size:13px;line-height:13px;color:#000;font-weight:normal;white-space:nowrap;letter-spacing:0.228px;font-family:'Liberation Sans', sans-serif;">Jenny Ekizabeth Leon Carreño</div>
<div style="position:absolute;left:-170.0px;width:1000px;text-align:center;top:580.00px;font-size:13px;line-height:13px;color:#000;font-weight:normal;white-space:nowrap;font-family:'Liberation Sans', sans-serif;">0</div>
<div style="position:absolute;left:-99.0px;width:1000px;text-align:center;top:580.00px;font-size:13px;line-height:13px;color:#000;font-weight:normal;white-space:nowrap;font-family:'Liberation Sans', sans-serif;">30</div>
<div style="position:absolute;left:43.0px;width:1000px;text-align:center;top:580.00px;font-size:13px;line-height:13px;color:#000;font-weight:normal;white-space:nowrap;font-family:'Liberation Sans', sans-serif;">3.96</div>
<div style="position:absolute;left:120.0px;width:1000px;text-align:center;top:580.00px;font-size:13px;line-height:13px;color:#000;font-weight:normal;white-space:nowrap;font-family:'Liberation Sans', sans-serif;">30</div>
<div style="position:absolute;left:26px;top:595px;width:636px;height:1px;background:#000"></div>
<div style="position:absolute;left:28px;top:600.00px;font-size:13px;line-height:13px;color:#000;font-weight:normal;white-space:nowrap;letter-spacing:0.23px;font-family:'Liberation Sans', sans-serif;">Lesly Mishel Pata Banguera</div>
<div style="position:absolute;left:-170.0px;width:1000px;text-align:center;top:600.00px;font-size:13px;line-height:13px;color:#000;font-weight:normal;white-space:nowrap;font-family:'Liberation Sans', sans-serif;">5.5</div>
<div style="position:absolute;left:-99.0px;width:1000px;text-align:center;top:600.00px;font-size:13px;line-height:13px;color:#000;font-weight:normal;white-space:nowrap;font-family:'Liberation Sans', sans-serif;">30</div>
<div style="position:absolute;left:43.0px;width:1000px;text-align:center;top:600.00px;font-size:13px;line-height:13px;color:#000;font-weight:normal;white-space:nowrap;font-family:'Liberation Sans', sans-serif;">0</div>
<div style="position:absolute;left:120.0px;width:1000px;text-align:center;top:600.00px;font-size:13px;line-height:13px;color:#000;font-weight:normal;white-space:nowrap;font-family:'Liberation Sans', sans-serif;">24.5</div>
<div style="position:absolute;left:26px;top:615px;width:636px;height:1px;background:#000"></div>
<div style="position:absolute;left:28px;top:620.00px;font-size:13px;line-height:13px;color:#000;font-weight:normal;white-space:nowrap;letter-spacing:0.146px;font-family:'Liberation Sans', sans-serif;">Wendy Jazmin Sánchez Campos</div>
<div style="position:absolute;left:-170.0px;width:1000px;text-align:center;top:620.00px;font-size:13px;line-height:13px;color:#000;font-weight:normal;white-space:nowrap;font-family:'Liberation Sans', sans-serif;">1</div>
<div style="position:absolute;left:-99.0px;width:1000px;text-align:center;top:620.00px;font-size:13px;line-height:13px;color:#000;font-weight:normal;white-space:nowrap;font-family:'Liberation Sans', sans-serif;">30</div>
<div style="position:absolute;left:43.0px;width:1000px;text-align:center;top:620.00px;font-size:13px;line-height:13px;color:#000;font-weight:normal;white-space:nowrap;font-family:'Liberation Sans', sans-serif;">2</div>
<div style="position:absolute;left:120.0px;width:1000px;text-align:center;top:620.00px;font-size:13px;line-height:13px;color:#000;font-weight:normal;white-space:nowrap;font-family:'Liberation Sans', sans-serif;">29</div>
<div style="position:absolute;left:26px;top:635px;width:636px;height:1px;background:#000"></div>
<div style="position:absolute;left:294px;top:356px;width:1px;height:280px;background:#000"></div>
<div style="position:absolute;left:365px;top:356px;width:1px;height:280px;background:#000"></div>
<div style="position:absolute;left:436px;top:356px;width:1px;height:280px;background:#000"></div>
<div style="position:absolute;left:507px;top:356px;width:1px;height:280px;background:#000"></div>
<div style="position:absolute;left:578px;top:356px;width:1px;height:280px;background:#000"></div>
<div style="position:absolute;left:661px;top:356px;width:1px;height:280px;background:#000"></div>
<svg style="position:absolute;left:579px;top:376px;" width="6" height="6" viewBox="0 0 6 6"><path d="M0 0 H6 L0 6 Z" fill="#217346"/></svg>
<svg style="position:absolute;left:579px;top:456px;" width="6" height="6" viewBox="0 0 6 6"><path d="M0 0 H6 L0 6 Z" fill="#217346"/></svg>
<div style="position:absolute;left:732px;top:375px;width:537px;height:1px;background:#000"></div>
<div style="position:absolute;left:732px;top:495px;width:537px;height:1px;background:#000"></div>
<div style="position:absolute;left:732px;top:375px;width:1px;height:121px;background:#000"></div>
<div style="position:absolute;left:1268px;top:375px;width:1px;height:121px;background:#000"></div>
<div style="position:absolute;left:804px;top:455px;width:394px;height:1px;background:#000"></div>
<div style="position:absolute;left:500.5px;width:1000px;text-align:center;top:460.00px;font-size:13px;line-height:13px;color:#000;font-weight:normal;white-space:nowrap;letter-spacing:0.05px;font-family:'Liberation Sans', sans-serif;">Srta. Ana Sosa Loor</div>
<div style="position:absolute;left:500.5px;width:1000px;text-align:center;top:480.00px;font-size:13px;line-height:13px;color:#000;font-weight:normal;white-space:nowrap;letter-spacing:0.35px;font-family:'Liberation Sans', sans-serif;">Delegada de Talento Humano</div>
<div style="position:absolute;left:577px;top:594px;width:86px;height:23px;border:2px solid #217346;box-sizing:border-box"></div>
<div style="position:absolute;left:657px;top:615px;width:2px;height:2px;background:#fff"></div>
<div style="position:absolute;left:661px;top:611px;width:3px;height:2px;background:#fff"></div>
<div style="position:absolute;left:659px;top:613px;width:6px;height:5px;background:#217346;outline:1px solid #fff"></div>
<div style="position:absolute;left:0px;top:679px;width:1360px;height:27px;background:#e6e6e6"></div>
<div style="position:absolute;left:0px;top:706px;width:1360px;height:1px;background:#c6c6c6"></div>
<svg style="position:absolute;left:26px;top:687px;" width="6" height="9" viewBox="0 0 6 9"><path d="M5.5 0 V9 L0.5 4.5 Z" fill="#c6c6c6"/></svg>
<svg style="position:absolute;left:55px;top:687px;" width="6" height="9" viewBox="0 0 6 9"><path d="M0.5 0 V9 L5.5 4.5 Z" fill="#217346"/></svg>
<div style="position:absolute;left:100px;top:678px;width:81px;height:25px;background:#fff"></div>
<div style="position:absolute;left:100px;top:678px;width:1px;height:25px;background:#ababab"></div>
<div style="position:absolute;left:180px;top:678px;width:1px;height:25px;background:#ababab"></div>
<div style="position:absolute;left:100px;top:701px;width:81px;height:2px;background:#217346"></div>
<div style="position:absolute;left:-359.5px;width:1000px;text-align:center;top:685.55px;font-size:12.35px;line-height:12.35px;color:#217346;font-weight:bold;white-space:nowrap;font-family:'Liberation Sans', sans-serif;">TOTALES</div>
<div style="position:absolute;left:-287.25px;width:1000px;text-align:center;top:686.43px;font-size:11.3px;line-height:11.3px;color:#444;font-weight:normal;white-space:nowrap;font-family:'Liberation Sans', sans-serif;">ENERO</div>
<div style="position:absolute;left:246px;top:683px;width:1px;height:18px;background:#b4b4b4"></div>
<div style="position:absolute;left:-214.85000000000002px;width:1000px;text-align:center;top:686.43px;font-size:11.3px;line-height:11.3px;color:#444;font-weight:normal;white-space:nowrap;font-family:'Liberation Sans', sans-serif;">FEBRERO</div>
<div style="position:absolute;left:325px;top:683px;width:1px;height:18px;background:#b4b4b4"></div>
<div style="position:absolute;left:-139.85000000000002px;width:1000px;text-align:center;top:686.43px;font-size:11.3px;line-height:11.3px;color:#444;font-weight:normal;white-space:nowrap;font-family:'Liberation Sans', sans-serif;">MARZO</div>
<div style="position:absolute;left:396px;top:683px;width:1px;height:18px;background:#b4b4b4"></div>
<div style="position:absolute;left:-74.60000000000002px;width:1000px;text-align:center;top:686.43px;font-size:11.3px;line-height:11.3px;color:#444;font-weight:normal;white-space:nowrap;font-family:'Liberation Sans', sans-serif;">ABRIL</div>
<div style="position:absolute;left:456px;top:683px;width:1px;height:18px;background:#b4b4b4"></div>
<div style="position:absolute;left:-12.399999999999977px;width:1000px;text-align:center;top:686.43px;font-size:11.3px;line-height:11.3px;color:#444;font-weight:normal;white-space:nowrap;font-family:'Liberation Sans', sans-serif;">MAYO</div>
<div style="position:absolute;left:520px;top:683px;width:1px;height:18px;background:#b4b4b4"></div>
<div style="position:absolute;left:50.700000000000045px;width:1000px;text-align:center;top:686.43px;font-size:11.3px;line-height:11.3px;color:#444;font-weight:normal;white-space:nowrap;font-family:'Liberation Sans', sans-serif;">JUNIO</div>
<div style="position:absolute;left:582px;top:683px;width:1px;height:18px;background:#b4b4b4"></div>
<div style="position:absolute;left:111.70000000000005px;width:1000px;text-align:center;top:686.43px;font-size:11.3px;line-height:11.3px;color:#444;font-weight:normal;white-space:nowrap;font-family:'Liberation Sans', sans-serif;">JULIO</div>
<div style="position:absolute;left:642px;top:683px;width:1px;height:18px;background:#b4b4b4"></div>
<div style="position:absolute;left:180.14999999999998px;width:1000px;text-align:center;top:686.43px;font-size:11.3px;line-height:11.3px;color:#444;font-weight:normal;white-space:nowrap;font-family:'Liberation Sans', sans-serif;">AGOSTO</div>
<div style="position:absolute;left:719px;top:683px;width:1px;height:18px;background:#b4b4b4"></div>
<div style="position:absolute;left:268.75px;width:1000px;text-align:center;top:686.43px;font-size:11.3px;line-height:11.3px;color:#444;font-weight:normal;white-space:nowrap;font-family:'Liberation Sans', sans-serif;">SEPTIEMBRE</div>
<div style="position:absolute;left:819px;top:683px;width:1px;height:18px;background:#b4b4b4"></div>
<div style="position:absolute;left:359.8499999999999px;width:1000px;text-align:center;top:686.43px;font-size:11.3px;line-height:11.3px;color:#444;font-weight:normal;white-space:nowrap;font-family:'Liberation Sans', sans-serif;">OCTUBRE</div>
<div style="position:absolute;left:901px;top:683px;width:1px;height:18px;background:#b4b4b4"></div>
<div style="position:absolute;left:449.9000000000001px;width:1000px;text-align:center;top:686.43px;font-size:11.3px;line-height:11.3px;color:#444;font-weight:normal;white-space:nowrap;font-family:'Liberation Sans', sans-serif;">NOVIEMBRE</div>
<div style="position:absolute;left:1000px;top:683px;width:1px;height:18px;background:#b4b4b4"></div>
<div style="position:absolute;left:528.8px;width:1000px;text-align:center;top:686.43px;font-size:11.3px;line-height:11.3px;color:#444;font-weight:normal;white-space:nowrap;font-family:'Liberation Sans', sans-serif;">DICIE</div>
<div style="position:absolute;left:1054px;top:694px;width:2px;height:2px;background:#217346"></div>
<div style="position:absolute;left:1058px;top:694px;width:2px;height:2px;background:#217346"></div>
<div style="position:absolute;left:1062px;top:694px;width:2px;height:2px;background:#217346"></div>
<svg style="position:absolute;left:1077px;top:684px;" width="17" height="17" viewBox="0 0 17 17"><circle cx="8.5" cy="8.5" r="7.7" fill="none" stroke="#777" stroke-width="1.3"/><path d="M8.5 4 V13 M4 8.5 H13" stroke="#777" stroke-width="1.6"/></svg>
<div style="position:absolute;left:1114px;top:687px;width:2px;height:2px;background:#b4b4b4"></div>
<div style="position:absolute;left:1114px;top:691px;width:2px;height:2px;background:#b4b4b4"></div>
<div style="position:absolute;left:1114px;top:695px;width:2px;height:2px;background:#b4b4b4"></div>
<div style="position:absolute;left:1131px;top:685px;width:16px;height:15px;background:#fff;border:1px solid #9a9a9a;box-sizing:border-box"></div>
<svg style="position:absolute;left:1136px;top:689px;" width="5" height="8" viewBox="0 0 5 8"><path d="M4.5 0 V8 L0.5 4 Z" fill="#222"/></svg>
<div style="position:absolute;left:1146px;top:685px;width:165px;height:15px;background:#fff;border:1px solid #9a9a9a;box-sizing:border-box"></div>
<div style="position:absolute;left:1311px;top:685px;width:13px;height:15px;background:#f0f0f0"></div>
<div style="position:absolute;left:1324px;top:685px;width:15px;height:15px;background:#fff;border:1px solid #9a9a9a;box-sizing:border-box"></div>
<svg style="position:absolute;left:1330px;top:689px;" width="5" height="8" viewBox="0 0 5 8"><path d="M0.5 0 V8 L4.5 4 Z" fill="#222"/></svg>
<div style="position:absolute;left:0px;top:707px;width:1360px;height:20px;background:#f3f3f3"></div>
<div style="position:absolute;left:0px;top:727px;width:1360px;height:1px;background:#fff"></div>
<div style="position:absolute;left:0px;top:728px;width:1360px;height:2px;background:#0d0d0d"></div>
<div style="position:absolute;left:7px;top:712.69px;font-size:11px;line-height:11px;color:#333;font-weight:normal;white-space:nowrap;font-family:'Liberation Sans', sans-serif;">Listo</div>
<svg style="position:absolute;left:49px;top:709px;" width="18" height="17" viewBox="0 0 18 17"><path d="M5 3.5 A6 6 0 1 0 8 15" fill="none" stroke="#555" stroke-width="1.1" stroke-dasharray="2 1.3"/><path d="M7.5 0.5 V7.5 H13 M11 5.5 L13 7.5 L11 9.5" fill="none" stroke="#444" stroke-width="1.1"/><path d="M8.5 9 L15.5 16 M15.5 9 L8.5 16" stroke="#444" stroke-width="1.8"/></svg>
<div style="position:absolute;left:69px;top:712.35px;font-size:11.4px;line-height:11.4px;color:#333;font-weight:normal;white-space:nowrap;font-family:'Liberation Sans', sans-serif;">Accesibilidad: es necesario investigar</div>
<div style="position:absolute;left:1060px;top:707px;width:40px;height:20px;background:#c8c8c8"></div>
<svg style="position:absolute;left:1073px;top:710px;" width="14" height="14" viewBox="0 0 14 14"><path d="M0.5 0.5 H13.5 V13.5 H0.5 Z M4.8 0.5 V13.5 M9.2 0.5 V13.5 M0.5 4.8 H13.5 M0.5 9.2 H13.5" fill="none" stroke="#666" stroke-width="1"/></svg>
<svg style="position:absolute;left:1113px;top:710px;" width="15" height="14" viewBox="0 0 15 14"><rect x="0.5" y="0.5" width="14" height="13" fill="none" stroke="#666"/><rect x="3.5" y="3" width="8" height="8" fill="none" stroke="#666"/><path d="M5 5.5 H10 M5 7.5 H10" stroke="#666"/></svg>
<svg style="position:absolute;left:1153px;top:710px;" width="15" height="14" viewBox="0 0 15 14"><path d="M0.5 0.5 H14.5 V13.5 H0.5 Z M0.5 8.5 H14.5 M7.5 0.5 V8.5 M4 0.5 V5" fill="none" stroke="#666"/></svg>
<div style="position:absolute;left:1186px;top:716px;width:8px;height:1px;background:#444"></div>
<div style="position:absolute;left:1199px;top:716px;width:100px;height:1px;background:#555"></div>
<div style="position:absolute;left:1247px;top:712px;width:5px;height:11px;background:#444"></div>
<div style="position:absolute;left:1303px;top:716px;width:9px;height:1px;background:#444"></div>
<div style="position:absolute;left:1307px;top:712px;width:1px;height:9px;background:#444"></div>
<div style="position:absolute;left:352px;width:1000px;text-align:right;top:712.01px;font-size:11.8px;line-height:11.8px;color:#333;font-weight:normal;white-space:nowrap;letter-spacing:-0.4px;font-family:'Liberation Sans', sans-serif;">100%</div>
</div></body></html>
